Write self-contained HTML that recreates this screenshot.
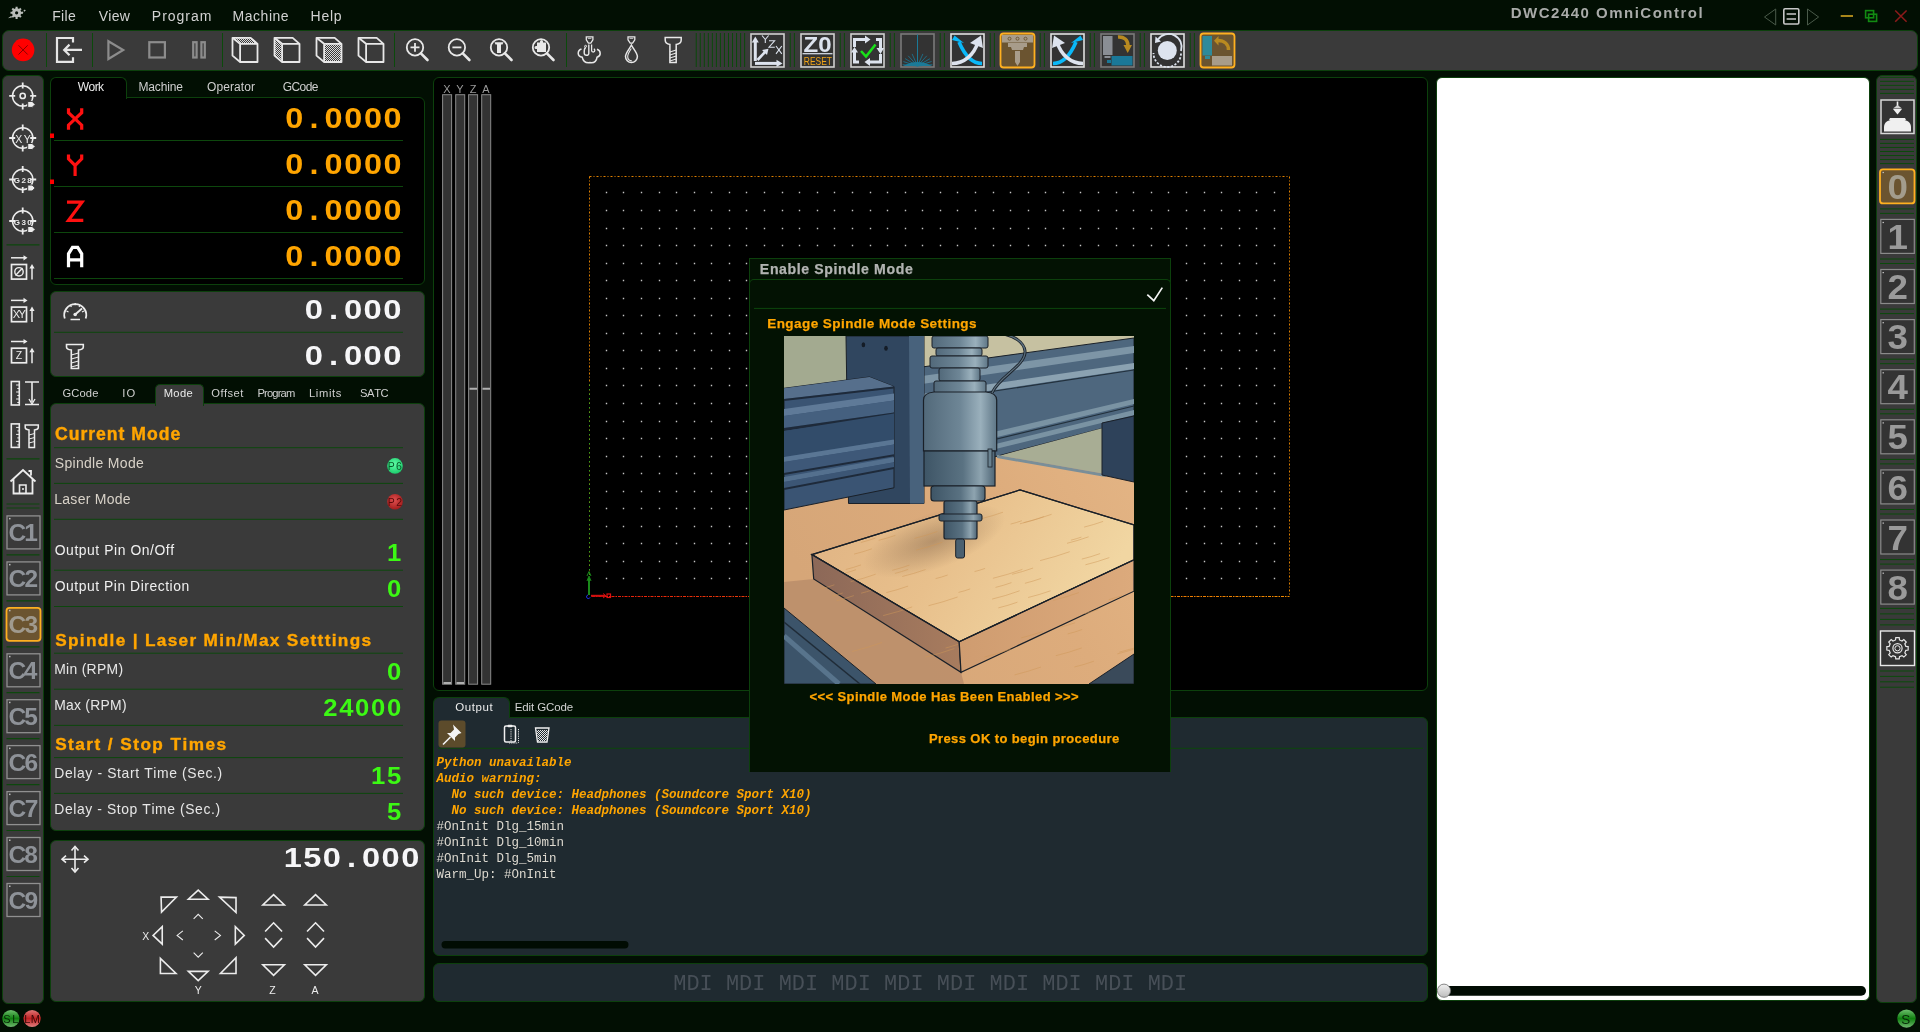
<!DOCTYPE html>
<html><head><meta charset="utf-8"><title>DWC2440 OmniControl</title>
<style>
*{margin:0;padding:0;box-sizing:border-box}
html,body{width:1920px;height:1032px;overflow:hidden;background:#020f03;font-family:"Liberation Sans",sans-serif}
.a{position:absolute}
.t{position:absolute;line-height:1;white-space:pre;font-kerning:none}
.s{position:absolute;overflow:visible}
#root{position:absolute;left:0;top:0;width:1920px;height:1032px;will-change:transform}
</style></head><body><div id="root">
<svg class="s" style="left:0px;top:0px;" width="40" height="30" viewBox="0 0 40 30"><polygon points="22.71,11.75 22.71,13.85 21.09,13.82 20.49,15.25 21.66,16.38 20.18,17.86 19.05,16.69 17.62,17.29 17.65,18.91 15.55,18.91 15.58,17.29 14.15,16.69 13.02,17.86 11.54,16.38 12.71,15.25 12.11,13.82 10.49,13.85 10.49,11.75 12.11,11.78 12.71,10.35 11.54,9.22 13.02,7.74 14.15,8.91 15.58,8.31 15.55,6.69 17.65,6.69 17.62,8.31 19.05,8.91 20.18,7.74 21.66,9.22 20.49,10.35 21.09,11.78" fill="#b9bdb9"/><circle cx="16.6" cy="12.8" r="1.6" fill="#010c03"/><path d="M8,18.2 L11,16 L12.5,17.2 Z" fill="#b9bdb9"/><path d="M21.5,13.5 L26,9.3" stroke="#b9bdb9" stroke-width="1.4" stroke-dasharray="2 1.2"/></svg>
<div class="t" style="left:52.15px;top:9.00px;font-size:14px;color:#d2d2d2;letter-spacing:0.371px;">File</div>
<div class="t" style="left:98.69px;top:9.00px;font-size:14px;color:#d2d2d2;letter-spacing:0.311px;">View</div>
<div class="t" style="left:151.85px;top:9.00px;font-size:14px;color:#d2d2d2;letter-spacing:0.981px;">Program</div>
<div class="t" style="left:232.60px;top:9.00px;font-size:14px;color:#d2d2d2;letter-spacing:0.517px;">Machine</div>
<div class="t" style="left:310.60px;top:9.00px;font-size:14px;color:#d2d2d2;letter-spacing:0.731px;">Help</div>
<div class="t" style="left:1510.80px;top:5.00px;font-size:15px;color:#a9aba9;letter-spacing:1.486px;font-weight:bold;">DWC2440 OmniControl</div>
<svg class="s" style="left:1760px;top:4px;" width="160" height="26" viewBox="0 0 160 26"><path d="M15.7,5 L4.5,13 L15.7,21 Z" fill="none" stroke="#4a5a4a" stroke-width="1"/><rect x="23.8" y="4.8" width="15" height="15.2" rx="1.2" fill="none" stroke="#c8c8c8" stroke-width="1.6"/><path d="M26.6,10 H36 M26.6,15 H36" stroke="#c8c8c8" stroke-width="1.6"/><path d="M47.5,5 L58.6,13 L47.5,21 Z" fill="none" stroke="#4a5a4a" stroke-width="1"/><path d="M80.7,12 H93" stroke="#a8861a" stroke-width="2"/><rect x="105.6" y="6.6" width="8" height="7.2" fill="none" stroke="#128a12" stroke-width="1.6"/><rect x="108.6" y="10.2" width="8" height="7.2" fill="none" stroke="#128a12" stroke-width="1.6"/><path d="M135.2,6.5 L146.6,17.8 M146.6,6.5 L135.2,17.8" stroke="#8a1a1a" stroke-width="1.6"/></svg>
<div class="a" style="left:2px;top:30px;width:1916px;height:41px;background:#3a3a3a;border:1px solid #0c400c;border-radius:7px"></div>
<svg class="s" style="left:0px;top:0px;" width="1920" height="80" viewBox="0 0 1920 80"><defs><pattern id="dots" width="2" height="2" patternUnits="userSpaceOnUse"><rect width="1" height="1" fill="#dcdcdc"/><rect x="1" y="1" width="1" height="1" fill="#dcdcdc"/></pattern></defs><path d="M46.5,33 V67" stroke="#0b4a0b" stroke-width="1"/><path d="M92.5,33 V67" stroke="#0b4a0b" stroke-width="1"/><path d="M222.5,33 V67" stroke="#0b4a0b" stroke-width="1"/><path d="M394.5,33 V67" stroke="#0b4a0b" stroke-width="1"/><path d="M566.5,33 V67" stroke="#0b4a0b" stroke-width="1"/><circle cx="23.1" cy="49.9" r="11.3" fill="#ff0000"/><path d="M18.5,45.3 L27.7,54.5 M27.7,45.3 L18.5,54.5" stroke="#7a0000" stroke-width="0.9"/><path d="M73,42.5 V38 H57 V61.8 H73 V57.3" fill="none" stroke="#e6e6e6" stroke-width="2.2"/><path d="M82,49.9 H64.5 M69.5,44.6 L64.2,49.9 L69.5,55.2" fill="none" stroke="#e6e6e6" stroke-width="2.2"/><path d="M108.4,41.2 L123.2,50 L108.4,59 Z" fill="none" stroke="#8c8c8c" stroke-width="2.2"/><rect x="149.3" y="42.2" width="15.6" height="15.3" fill="none" stroke="#8c8c8c" stroke-width="2.2"/><rect x="193.2" y="42.2" width="3.4" height="15.3" fill="none" stroke="#8c8c8c" stroke-width="2.2"/><rect x="201.4" y="42.2" width="3.4" height="15.3" fill="none" stroke="#8c8c8c" stroke-width="2.2"/><polygon points="232.5,37.8 250.7,37.8 257.5,43.8 240.1,43.8" fill="url(#dots)"/><polygon points="232.5,37.8 250.7,37.8 257.5,43.8 257.5,62.0 240.1,62.0 232.5,55.6" fill="none" stroke="#e8e8e8" stroke-width="1.8" stroke-linejoin="round"/><path d="M232.5,37.8 L240.1,43.8 H257.5 M240.1,43.8 V62" fill="none" stroke="#e8e8e8" stroke-width="1.8"/><polygon points="274.5,37.8 282.1,43.8 282.1,62.0 274.5,55.6" fill="url(#dots)"/><polygon points="274.5,37.8 292.7,37.8 299.5,43.8 299.5,62.0 282.1,62.0 274.5,55.6" fill="none" stroke="#e8e8e8" stroke-width="1.8" stroke-linejoin="round"/><path d="M274.5,37.8 L282.1,43.8 H299.5 M282.1,43.8 V62" fill="none" stroke="#e8e8e8" stroke-width="1.8"/><polygon points="324.1,43.8 341.5,43.8 341.5,62.0 324.1,62.0" fill="url(#dots)"/><polygon points="316.5,37.8 334.7,37.8 341.5,43.8 341.5,62.0 324.1,62.0 316.5,55.6" fill="none" stroke="#e8e8e8" stroke-width="1.8" stroke-linejoin="round"/><path d="M316.5,37.8 L324.1,43.8 H341.5 M324.1,43.8 V62" fill="none" stroke="#e8e8e8" stroke-width="1.8"/><polygon points="358.5,37.8 376.7,37.8 383.5,43.8 383.5,62.0 366.1,62.0 358.5,55.6" fill="none" stroke="#e8e8e8" stroke-width="1.8" stroke-linejoin="round"/><path d="M358.5,37.8 L366.1,43.8 H383.5 M366.1,43.8 V62" fill="none" stroke="#e8e8e8" stroke-width="1.8"/><circle cx="415" cy="47.4" r="8.2" fill="none" stroke="#e8e8e8" stroke-width="1.8"/><path d="M420.9,53.3 L427.5,60" stroke="#e8e8e8" stroke-width="2.6" stroke-linecap="round"/><path d="M410.5,47.4 H419.5 M415,43 V51.8" stroke="#e8e8e8" stroke-width="1.8"/><circle cx="456.9" cy="47.4" r="8.2" fill="none" stroke="#e8e8e8" stroke-width="1.8"/><path d="M462.79999999999995,53.3 L469.4,60" stroke="#e8e8e8" stroke-width="2.6" stroke-linecap="round"/><path d="M452.4,47.4 H461.4" stroke="#e8e8e8" stroke-width="1.8"/><circle cx="499" cy="47.4" r="8.2" fill="none" stroke="#e8e8e8" stroke-width="1.8"/><path d="M504.9,53.3 L511.5,60" stroke="#e8e8e8" stroke-width="2.6" stroke-linecap="round"/><path d="M494.5,42.2 H503.5 L502.5,44.5 H501 V53 H497 V44.5 H495.5 Z" fill="#e8e8e8"/><circle cx="541" cy="47.4" r="8.2" fill="none" stroke="#e8e8e8" stroke-width="1.8"/><path d="M546.9,53.3 L553.5,60" stroke="#e8e8e8" stroke-width="2.6" stroke-linecap="round"/><path d="M537,42.5 H540 V41.5 A1.5,1.5 0 0 1 543,41.5 V42.5 H546 V52 H537 V49 H536 A1.5,1.5 0 0 1 536,46 H537 Z" fill="#e8e8e8"/><path d="M586.3,36.8 H592.9 V39.8 L590.8,43.2 H588.4 L586.3,39.8 Z" fill="none" stroke="#e8e8e8" stroke-width="1.3"/><path d="M587.8,38.4 H591.4" stroke="#e8e8e8" stroke-width="0.8"/><path d="M588.8,44.4 V53.5 C588.8,56 584.3,56 584.2,53 C584.1,50.5 584.3,48.5 585.6,47.4" fill="none" stroke="#e8e8e8" stroke-width="1.4"/><circle cx="585.6" cy="46.3" r="1" fill="none" stroke="#e8e8e8" stroke-width="1"/><path d="M591.6,44.4 V50.5 C591.6,52.5 594.8,52.5 594.8,50.5 C594.8,49.5 594.3,49 593.8,48.8" fill="none" stroke="#e8e8e8" stroke-width="1.3"/><path d="M581.5,49 C577,50.5 577,56.5 582.3,57.3 C583,61.5 586.5,63 590,62.6 C593.5,63 596.5,61.5 597,57.3 C601.5,56 601,50.5 597,49.3" fill="none" stroke="#e8e8e8" stroke-width="1.5"/><path d="M628,36.8 H634.8 V39.8 L632.6,43.2 H630.2 L628,39.8 Z" fill="none" stroke="#e8e8e8" stroke-width="1.3"/><path d="M629.5,38.4 H633.3" stroke="#e8e8e8" stroke-width="0.8"/><path d="M631.4,45 C629.5,49 625.5,53 625.5,56.5 A5.95,5.95 0 0 0 637.4,56.5 C637.4,53 633.3,49 631.4,45 Z" fill="none" stroke="#e8e8e8" stroke-width="1.5"/><path d="M631.3,48.5 C629.5,51.5 627.7,54 627.7,56.5 C627.7,59 629.5,60.8 631.8,60.9" fill="none" stroke="#e8e8e8" stroke-width="1.1"/><path d="M665.2,37.6 H681.2 V40 C681.2,42.5 679.5,44 676.2,44.4 V62.5 H669.9 V44.4 C666.8,44 665.2,42.5 665.2,40 Z" fill="none" stroke="#e8e8e8" stroke-width="1.5"/><path d="M669.9,52 L676.2,50 M669.9,55 L676.2,53 M669.9,58 L676.2,56 M669.9,61 L676.2,59" stroke="#e8e8e8" stroke-width="1.1"/><path d="M696.25,33 V67" stroke="#0b4a0b" stroke-width="1"/><path d="M700.28,33 V67" stroke="#0b4a0b" stroke-width="1"/><path d="M704.31,33 V67" stroke="#0b4a0b" stroke-width="1"/><path d="M708.34,33 V67" stroke="#0b4a0b" stroke-width="1"/><path d="M712.37,33 V67" stroke="#0b4a0b" stroke-width="1"/><path d="M716.40,33 V67" stroke="#0b4a0b" stroke-width="1"/><path d="M720.43,33 V67" stroke="#0b4a0b" stroke-width="1"/><path d="M724.46,33 V67" stroke="#0b4a0b" stroke-width="1"/><path d="M728.49,33 V67" stroke="#0b4a0b" stroke-width="1"/><path d="M732.52,33 V67" stroke="#0b4a0b" stroke-width="1"/><path d="M736.55,33 V67" stroke="#0b4a0b" stroke-width="1"/><path d="M740.58,33 V67" stroke="#0b4a0b" stroke-width="1"/><path d="M744.61,33 V67" stroke="#0b4a0b" stroke-width="1"/><path d="M790.25,33 V67 M794.4,33 V67" stroke="#0b4a0b" stroke-width="1"/><path d="M840.25,33 V67 M844.4,33 V67" stroke="#0b4a0b" stroke-width="1"/><path d="M890.25,33 V67 M894.4,33 V67" stroke="#0b4a0b" stroke-width="1"/><path d="M940.25,33 V67 M944.4,33 V67" stroke="#0b4a0b" stroke-width="1"/><path d="M990.25,33 V67 M994.4,33 V67" stroke="#0b4a0b" stroke-width="1"/><path d="M1040.25,33 V67 M1044.4,33 V67" stroke="#0b4a0b" stroke-width="1"/><path d="M1090.25,33 V67 M1094.4,33 V67" stroke="#0b4a0b" stroke-width="1"/><path d="M1140.25,33 V67 M1144.4,33 V67" stroke="#0b4a0b" stroke-width="1"/><path d="M1190.25,33 V67 M1194.4,33 V67" stroke="#0b4a0b" stroke-width="1"/><rect x="751" y="34" width="33" height="33" fill="#333" stroke="#d0d0d0" stroke-width="1.6"/><path d="M755.3,61 V42" stroke="#dde3ee" stroke-width="3"/><path d="M751.8,42.5 L755.3,36.5 L758.8,42.5 Z" fill="#dde3ee"/><path d="M755,63.4 H777" stroke="#dde3ee" stroke-width="3"/><path d="M776.5,59.8 L782.5,63.4 L776.5,67 Z" fill="#dde3ee"/><path d="M757.5,60 L765,52" stroke="#dde3ee" stroke-width="2.6"/><path d="M762,50 L768.5,48.8 L767,55 Z" fill="#dde3ee"/><path d="M762,35.5 L765.3,39.5 L768.6,35.5 M765.3,39.5 V43 M769,40.8 H774.6 L769,47.2 H774.8 M776,46 L781.8,53.8 M781.8,46 L776,53.8" fill="none" stroke="#dde3ee" stroke-width="1.1"/><rect x="801" y="34" width="33" height="33" fill="#333" stroke="#d0d0d0" stroke-width="1.6"/><path d="M802.5,53.7 H832.5" stroke="#dde3ee" stroke-width="1.2"/><rect x="851" y="34" width="33" height="33" fill="#333" stroke="#d0d0d0" stroke-width="1.6"/><path d="M854.5,47 V39.5 H866 M876,39.5 H880.5 V49 M880.5,54 V62 H869 M859,62 H854.5 V52" fill="none" stroke="#dde3ee" stroke-width="3"/><path d="M865,35.5 L870.5,39.5 L865,43.5 Z M876.5,48 L880.5,54 L884,48 Z M870,58 L864.5,62 L870,66 Z M851,52.5 L854.5,47 L858,52.5 Z" fill="#dde3ee"/><path d="M861,51 L866,56.5 L875.5,44.5" fill="none" stroke="#19e019" stroke-width="2.6"/><rect x="901" y="34" width="33" height="33" fill="#333" stroke="#7a7a7a" stroke-width="1.6"/><path d="M917.5,34.5 V66" stroke="#1b7a98" stroke-width="1"/><path d="M917.5,66 L932.4,64.7" stroke="#1b7a98" stroke-width="0.8"/><path d="M917.5,66 L931.6,61.5" stroke="#1b7a98" stroke-width="0.8"/><path d="M917.5,66 L929.9,58.7" stroke="#1b7a98" stroke-width="0.8"/><path d="M917.5,66 L926.8,55.8" stroke="#1b7a98" stroke-width="0.8"/><path d="M917.5,66 L922.9,53.9" stroke="#1b7a98" stroke-width="0.8"/><path d="M917.5,66 L912.1,53.9" stroke="#1b7a98" stroke-width="0.8"/><path d="M917.5,66 L908.2,55.8" stroke="#1b7a98" stroke-width="0.8"/><path d="M917.5,66 L905.1,58.6" stroke="#1b7a98" stroke-width="0.8"/><path d="M917.5,66 L903.4,61.6" stroke="#1b7a98" stroke-width="0.8"/><path d="M917.5,66 L902.6,64.7" stroke="#1b7a98" stroke-width="0.8"/><path d="M903,66 Q917.5,58 932,66 Z" fill="#1b7a98"/><g transform="translate(967.5,0) scale(1,1) translate(-967.5,0)"><rect x="951" y="34" width="33" height="33" fill="#333" stroke="#e0e0e0" stroke-width="1.6"/><path d="M982,63.5 C972,63.5 965,56 959,42" fill="none" stroke="#0ab8f8" stroke-width="3.6"/><path d="M952,40 L954.5,35.5 L964,43 Z" fill="#0ab8f8"/><path d="M952,63.5 C964,63.5 974,55 978,42" fill="none" stroke="#dde3ee" stroke-width="3.6"/><path d="M970,43 L981,35.5 L983,48 Z" fill="#dde3ee"/></g><g transform="translate(1067.5,0) scale(-1,1) translate(-1067.5,0)"><rect x="1051" y="34" width="33" height="33" fill="#333" stroke="#e0e0e0" stroke-width="1.6"/><path d="M1082,63.5 C1072,63.5 1065,56 1059,42" fill="none" stroke="#0ab8f8" stroke-width="3.6"/><path d="M1052,40 L1054.5,35.5 L1064,43 Z" fill="#0ab8f8"/><path d="M1052,63.5 C1064,63.5 1074,55 1078,42" fill="none" stroke="#dde3ee" stroke-width="3.6"/><path d="M1070,43 L1081,35.5 L1083,48 Z" fill="#dde3ee"/></g><rect x="1000.5" y="33.5" width="34" height="34" rx="3" fill="#6b5430" stroke="#ffb020" stroke-width="1.8"/><rect x="1002" y="35" width="31" height="7.5" fill="#a89c8a"/><circle cx="1009.5" cy="38.7" r="1.5" fill="none" stroke="#6b5430" stroke-width="0.9"/><circle cx="1017.5" cy="38.7" r="1.5" fill="none" stroke="#6b5430" stroke-width="0.9"/><circle cx="1025.5" cy="38.7" r="1.5" fill="none" stroke="#6b5430" stroke-width="0.9"/><path d="M1008,43 H1027 V47 H1024 L1023,50 H1012 L1011,47 H1008 Z" fill="#a89c8a"/><path d="M1015,51 H1020 V62 L1017.5,66 L1015,62 Z" fill="#a89c8a"/><rect x="1101" y="34" width="33" height="33" fill="#333" stroke="#7a7a7a" stroke-width="1.6"/><rect x="1103" y="36" width="9.5" height="19" fill="#8a8e94"/><rect x="1104.5" y="56" width="6" height="2" fill="#8a8e94"/><rect x="1111.5" y="56" width="21" height="9.5" fill="#1a7898"/><rect x="1107" y="60" width="4" height="3" fill="#1a7898"/><path d="M1118,37 C1124,36.5 1128,40 1128,45.5" fill="none" stroke="#b88a20" stroke-width="3.5"/><path d="M1123.5,45 L1132,45 L1127.7,53 Z" fill="#b88a20"/><rect x="1151" y="34" width="33" height="33" fill="#333" stroke="#e0e0e0" stroke-width="1.6"/><circle cx="1167.3" cy="50.5" r="9.5" fill="#dde3ee"/><path d="M1158,39.5 A13,13 0 0 1 1181,51" fill="none" stroke="#dde3ee" stroke-width="1.8"/><path d="M1155.5,36.5 L1155,43 L1161,41.5 Z" fill="#dde3ee"/><path d="M1181,53.5 A13,13 0 0 1 1153.5,53" fill="none" stroke="#dde3ee" stroke-width="1.8" stroke-dasharray="2.2 1.6"/><rect x="1200.5" y="33.5" width="34" height="34" rx="3" fill="#6b5430" stroke="#ffb020" stroke-width="1.8"/><rect x="1202.5" y="36" width="9.5" height="19.5" fill="#2e8a9a"/><rect x="1205" y="56" width="5" height="3" fill="#2e8a9a"/><rect x="1212" y="56" width="20" height="9.5" fill="#a89c8a"/><path d="M1228.5,50 C1228.5,44 1224,40.5 1218,40.5" fill="none" stroke="#b88a20" stroke-width="3.5"/><path d="M1218.5,36 L1214,40.8 L1218.5,45.5 Z" fill="#b88a20"/></svg>
<svg class="s" style="left:0;top:0" width="1" height="1"><text x="803.8" y="64.9" font-family="Liberation Sans" font-size="11.6" fill="#f0a418" textLength="28.2" lengthAdjust="spacingAndGlyphs">RESET</text><text x="803.5" y="51.8" font-family="Liberation Sans" font-weight="bold" font-size="21.5" fill="#dde3ee" textLength="28" lengthAdjust="spacingAndGlyphs">Z0</text></svg>
<div class="a" style="left:2px;top:75px;width:42px;height:929px;background:#3a3a3a;border:1px solid #0c400c;border-radius:6px"></div>
<svg class="s" style="left:0px;top:0px;" width="48" height="520" viewBox="0 0 48 520"><circle cx="22.7" cy="95.9" r="10.2" fill="none" stroke="#ececec" stroke-width="1.5"/><path d="M22.7,82.4 V88.4 M22.7,103.4 V109.4 M9.2,95.9 H15.2 M30.2,95.9 H36.2" stroke="#ececec" stroke-width="1.8"/><path d="M27.7,101.4 h4.5 l3,3 l-3,3 h-4.5 Z" fill="#ececec" stroke="#3a3a3a" stroke-width="1"/><circle cx="22.7" cy="95.9" r="2.6" fill="none" stroke="#ececec" stroke-width="1.6"/><circle cx="22.7" cy="138" r="10.2" fill="none" stroke="#ececec" stroke-width="1.5"/><path d="M22.7,124.5 V130.5 M22.7,145.5 V151.5 M9.2,138 H15.2 M30.2,138 H36.2" stroke="#ececec" stroke-width="1.8"/><path d="M27.7,143.5 h4.5 l3,3 l-3,3 h-4.5 Z" fill="#ececec" stroke="#3a3a3a" stroke-width="1"/><circle cx="22.7" cy="179.5" r="10.2" fill="none" stroke="#ececec" stroke-width="1.5"/><path d="M22.7,166.0 V172.0 M22.7,187.0 V193.0 M9.2,179.5 H15.2 M30.2,179.5 H36.2" stroke="#ececec" stroke-width="1.8"/><path d="M27.7,185.0 h4.5 l3,3 l-3,3 h-4.5 Z" fill="#ececec" stroke="#3a3a3a" stroke-width="1"/><circle cx="22.7" cy="221" r="10.2" fill="none" stroke="#ececec" stroke-width="1.5"/><path d="M22.7,207.5 V213.5 M22.7,228.5 V234.5 M9.2,221 H15.2 M30.2,221 H36.2" stroke="#ececec" stroke-width="1.8"/><path d="M27.7,226.5 h4.5 l3,3 l-3,3 h-4.5 Z" fill="#ececec" stroke="#3a3a3a" stroke-width="1"/></svg>
<div class="t" style="left:15.26px;top:134.00px;font-size:10.5px;color:#ececec;letter-spacing:1.460px;">XY</div>
<div class="t" style="left:13.87px;top:177.00px;font-size:8px;color:#ececec;letter-spacing:1.377px;font-weight:bold;">G28</div>
<div class="t" style="left:13.87px;top:219.00px;font-size:8px;color:#ececec;letter-spacing:1.418px;font-weight:bold;">G30</div>
<svg class="s" style="left:0px;top:0px;" width="48" height="520" viewBox="0 0 48 520"><path d="M6.5,244.8 H39.5" stroke="#0d470d" stroke-width="1.2"/><path d="M11,257.8 H24.5" stroke="#ececec" stroke-width="1.5"/><path d="M23.5,255.2 L27.5,257.8 L23.5,260.4 Z" fill="#ececec"/><rect x="11.5" y="264.5" width="15" height="14.6" fill="none" stroke="#ececec" stroke-width="1.7"/><path d="M32,279.5 V267.5" stroke="#ececec" stroke-width="1.5"/><path d="M29.4,268.5 L32,264 L34.6,268.5 Z" fill="#ececec"/><circle cx="19" cy="271.8" r="4.2" fill="none" stroke="#ececec" stroke-width="1.4"/><path d="M15.5,275.5 L22.5,268" stroke="#ececec" stroke-width="1.4"/><path d="M11,300.40000000000003 H24.5" stroke="#ececec" stroke-width="1.5"/><path d="M23.5,297.8 L27.5,300.40000000000003 L23.5,303.0 Z" fill="#ececec"/><rect x="11.5" y="307.1" width="15" height="14.6" fill="none" stroke="#ececec" stroke-width="1.7"/><path d="M32,322.1 V310.1" stroke="#ececec" stroke-width="1.5"/><path d="M29.4,311.1 L32,306.6 L34.6,311.1 Z" fill="#ececec"/><path d="M11,341.5 H24.5" stroke="#ececec" stroke-width="1.5"/><path d="M23.5,338.9 L27.5,341.5 L23.5,344.09999999999997 Z" fill="#ececec"/><rect x="11.5" y="348.2" width="15" height="14.6" fill="none" stroke="#ececec" stroke-width="1.7"/><path d="M32,363.2 V351.2" stroke="#ececec" stroke-width="1.5"/><path d="M29.4,352.2 L32,347.7 L34.6,352.2 Z" fill="#ececec"/><rect x="11.3" y="381.5" width="8" height="23.5" fill="none" stroke="#ececec" stroke-width="1.6"/><path d="M16.1,385.0 H19.3" stroke="#ececec" stroke-width="1"/><path d="M17.3,388.5 H19.3" stroke="#ececec" stroke-width="1"/><path d="M16.1,392.0 H19.3" stroke="#ececec" stroke-width="1"/><path d="M17.3,395.5 H19.3" stroke="#ececec" stroke-width="1"/><path d="M16.1,399.0 H19.3" stroke="#ececec" stroke-width="1"/><path d="M17.3,402.5 H19.3" stroke="#ececec" stroke-width="1"/><rect x="11.3" y="423.9" width="8" height="23.5" fill="none" stroke="#ececec" stroke-width="1.6"/><path d="M16.1,427.4 H19.3" stroke="#ececec" stroke-width="1"/><path d="M17.3,430.9 H19.3" stroke="#ececec" stroke-width="1"/><path d="M16.1,434.4 H19.3" stroke="#ececec" stroke-width="1"/><path d="M17.3,437.9 H19.3" stroke="#ececec" stroke-width="1"/><path d="M16.1,441.4 H19.3" stroke="#ececec" stroke-width="1"/><path d="M17.3,444.9 H19.3" stroke="#ececec" stroke-width="1"/><path d="M25,382 H39 M25,404.5 H39 M32,382 V402" stroke="#ececec" stroke-width="1.6"/><path d="M29,399 L32,404 L35,399" fill="none" stroke="#ececec" stroke-width="1.4"/><path d="M25.2,425 H38.3 V427.5 C38.3,429 36,429.8 34.5,430 V447.5 H29 V430 C27.5,429.8 25.2,429 25.2,427.5 Z" fill="none" stroke="#ececec" stroke-width="1.5"/><path d="M29,435 L34.5,433.5 M29,439 L34.5,437.5 M29,443 L34.5,441.5" stroke="#ececec" stroke-width="1"/><path d="M6.5,458.8 H39.5 M6.5,504 H39.5 M6.5,508 H39.5" stroke="#0d470d" stroke-width="1.2"/><path d="M10.5,481.5 L23,470 L35.5,481.5 M13.5,479 V493.5 H32.5 V479 M31,475.5 V471 H28.5" fill="none" stroke="#ececec" stroke-width="1.8"/><path d="M19.5,493.5 V485 H26 V493.5 M22,489 H24" fill="none" stroke="#ececec" stroke-width="1.6"/></svg>
<div class="t" style="left:15.67px;top:350.00px;font-size:10.5px;color:#ececec;">Z</div>
<div class="t" style="left:12.75px;top:309.00px;font-size:11px;color:#ececec;letter-spacing:-1.685px;">XY</div>
<svg class="s" style="left:0px;top:0px;" width="48" height="1032" viewBox="0 0 48 1032"><rect x="7" y="515.9" width="33" height="33" fill="#3a3a3a" stroke="#909090" stroke-width="1.3"/><rect x="9" y="517.9" width="1.5" height="1.5" fill="#bbb"/><path d="M6.5,554.9 H39.5" stroke="#0d470d" stroke-width="1.2"/><rect x="7" y="561.9" width="33" height="33" fill="#3a3a3a" stroke="#909090" stroke-width="1.3"/><rect x="9" y="563.9" width="1.5" height="1.5" fill="#bbb"/><path d="M6.5,600.8 H39.5" stroke="#0d470d" stroke-width="1.2"/><rect x="6.5" y="607.8" width="34" height="33" rx="3" fill="#6b5430" stroke="#ffb020" stroke-width="1.8"/><rect x="9" y="609.8" width="1.5" height="1.5" fill="#bbb"/><path d="M6.5,646.8 H39.5" stroke="#0d470d" stroke-width="1.2"/><rect x="7" y="653.8" width="33" height="33" fill="#3a3a3a" stroke="#909090" stroke-width="1.3"/><rect x="9" y="655.8" width="1.5" height="1.5" fill="#bbb"/><path d="M6.5,692.7 H39.5" stroke="#0d470d" stroke-width="1.2"/><rect x="7" y="699.7" width="33" height="33" fill="#3a3a3a" stroke="#909090" stroke-width="1.3"/><rect x="9" y="701.7" width="1.5" height="1.5" fill="#bbb"/><path d="M6.5,738.6 H39.5" stroke="#0d470d" stroke-width="1.2"/><rect x="7" y="745.6" width="33" height="33" fill="#3a3a3a" stroke="#909090" stroke-width="1.3"/><rect x="9" y="747.6" width="1.5" height="1.5" fill="#bbb"/><path d="M6.5,784.6 H39.5" stroke="#0d470d" stroke-width="1.2"/><rect x="7" y="791.6" width="33" height="33" fill="#3a3a3a" stroke="#909090" stroke-width="1.3"/><rect x="9" y="793.6" width="1.5" height="1.5" fill="#bbb"/><path d="M6.5,830.5 H39.5" stroke="#0d470d" stroke-width="1.2"/><rect x="7" y="837.5" width="33" height="33" fill="#3a3a3a" stroke="#909090" stroke-width="1.3"/><rect x="9" y="839.5" width="1.5" height="1.5" fill="#bbb"/><path d="M6.5,876.5 H39.5" stroke="#0d470d" stroke-width="1.2"/><rect x="7" y="883.5" width="33" height="33" fill="#3a3a3a" stroke="#909090" stroke-width="1.3"/><rect x="9" y="885.5" width="1.5" height="1.5" fill="#bbb"/></svg>
<div class="t" style="left:8.60px;top:521.00px;font-size:24.5px;color:#8e9298;letter-spacing:-2.032px;font-weight:bold;">C1</div>
<div class="t" style="left:8.60px;top:567.00px;font-size:24.5px;color:#8e9298;letter-spacing:-1.733px;font-weight:bold;">C2</div>
<div class="t" style="left:8.60px;top:613.00px;font-size:24.5px;color:#a09a8e;letter-spacing:-1.829px;font-weight:bold;">C3</div>
<div class="t" style="left:8.60px;top:659.00px;font-size:24.5px;color:#8e9298;letter-spacing:-2.582px;font-weight:bold;">C4</div>
<div class="t" style="left:8.60px;top:705.00px;font-size:24.5px;color:#8e9298;letter-spacing:-2.032px;font-weight:bold;">C5</div>
<div class="t" style="left:8.60px;top:751.00px;font-size:24.5px;color:#8e9298;letter-spacing:-1.829px;font-weight:bold;">C6</div>
<div class="t" style="left:8.60px;top:797.00px;font-size:24.5px;color:#8e9298;letter-spacing:-1.637px;font-weight:bold;">C7</div>
<div class="t" style="left:8.60px;top:843.00px;font-size:24.5px;color:#8e9298;letter-spacing:-1.960px;font-weight:bold;">C8</div>
<div class="t" style="left:8.60px;top:889.00px;font-size:24.5px;color:#8e9298;letter-spacing:-1.805px;font-weight:bold;">C9</div>
<svg class="s" style="left:0px;top:1000px;" width="60" height="32" viewBox="0 0 60 32"><defs><linearGradient id="lg" x1="0" y1="0" x2="0" y2="1"><stop offset="0" stop-color="#70c070"/><stop offset="0.5" stop-color="#108010"/><stop offset="1" stop-color="#70b870"/></linearGradient><linearGradient id="lr" x1="0" y1="0" x2="0" y2="1"><stop offset="0" stop-color="#e07878"/><stop offset="0.5" stop-color="#c02020"/><stop offset="1" stop-color="#e08080"/></linearGradient></defs><circle cx="10.9" cy="18.5" r="8.6" fill="url(#lg)"/><circle cx="32.1" cy="18.5" r="8.6" fill="url(#lr)"/></svg>
<div class="t" style="left:3.30px;top:1014.00px;font-size:11px;color:#062806;letter-spacing:1.510px;">SL</div>
<div class="t" style="left:24.30px;top:1014.00px;font-size:11px;color:#3a0606;letter-spacing:0.324px;">LM</div>
<div class="a" style="left:50px;top:97px;width:375px;height:188px;background:#000;border:1px solid #0c400c;border-radius:0 6px 6px 6px"></div>
<div class="a" style="left:50px;top:77px;width:77px;height:22px;background:#000;border:1px solid #0c400c;border-bottom:none;border-radius:6px 6px 0 0"></div>
<div class="t" style="left:77.75px;top:81.00px;font-size:12px;color:#ececec;letter-spacing:-0.554px;">Work</div>
<div class="t" style="left:138.52px;top:81.00px;font-size:12px;color:#cfcfcf;letter-spacing:-0.157px;">Machine</div>
<div class="t" style="left:207.03px;top:81.00px;font-size:12px;color:#cfcfcf;letter-spacing:0.080px;">Operator</div>
<div class="t" style="left:282.80px;top:81.00px;font-size:12px;color:#cfcfcf;letter-spacing:-0.596px;">GCode</div>
<svg class="s" style="left:0px;top:0px;" width="440" height="300" viewBox="0 0 440 300"><path d="M54,140.5 H403" stroke="#0d470d" stroke-width="1"/><path d="M54,186.5 H403" stroke="#0d470d" stroke-width="1"/><path d="M54,232.5 H403" stroke="#0d470d" stroke-width="1"/><path d="M54,278.5 H403" stroke="#0d470d" stroke-width="1"/><rect x="50" y="133.5" width="4" height="4.5" fill="#ff0000"/><rect x="50" y="179.5" width="4" height="4.5" fill="#ff0000"/><path d="M68.5,108.2 V112.7 L75.1,118.9 L81.7,112.7 V108.2 M68.5,129.7 V125.2 L75.1,118.9 L81.7,125.2 V129.7" fill="none" stroke="#ff1010" stroke-width="3.2"/><path d="M68.5,154.4 V158.9 L75.1,165.4 L81.7,158.9 V154.4 M75.1,165.4 V175.9" fill="none" stroke="#ff1010" stroke-width="3.2"/><path d="M67,202.1 H82 L68.5,220.3 H83.3" fill="none" stroke="#ff1010" stroke-width="3.2"/><path d="M68.5,267.3 V253.8 L72.5,247.4 H77.7 L81.7,253.8 V267.3 M68.5,259.8 H81.7" fill="none" stroke="#ffffff" stroke-width="3.2"/></svg>
<svg class="s" style="left:0;top:0" width="1" height="1"><g font-family="Liberation Sans" font-weight="bold" font-size="28.67" fill="#ffa500"><text transform="translate(294.30,127.72) scale(1.129,1)" text-anchor="middle">0</text><text transform="translate(313.95,127.72) scale(1.129,1)" text-anchor="middle">.</text><text transform="translate(333.60,127.72) scale(1.129,1)" text-anchor="middle">0</text><text transform="translate(353.25,127.72) scale(1.129,1)" text-anchor="middle">0</text><text transform="translate(372.90,127.72) scale(1.129,1)" text-anchor="middle">0</text><text transform="translate(392.55,127.72) scale(1.129,1)" text-anchor="middle">0</text></g></svg>
<svg class="s" style="left:0;top:0" width="1" height="1"><g font-family="Liberation Sans" font-weight="bold" font-size="28.67" fill="#ffa500"><text transform="translate(294.30,173.72) scale(1.129,1)" text-anchor="middle">0</text><text transform="translate(313.95,173.72) scale(1.129,1)" text-anchor="middle">.</text><text transform="translate(333.60,173.72) scale(1.129,1)" text-anchor="middle">0</text><text transform="translate(353.25,173.72) scale(1.129,1)" text-anchor="middle">0</text><text transform="translate(372.90,173.72) scale(1.129,1)" text-anchor="middle">0</text><text transform="translate(392.55,173.72) scale(1.129,1)" text-anchor="middle">0</text></g></svg>
<svg class="s" style="left:0;top:0" width="1" height="1"><g font-family="Liberation Sans" font-weight="bold" font-size="28.67" fill="#ffa500"><text transform="translate(294.30,219.72) scale(1.129,1)" text-anchor="middle">0</text><text transform="translate(313.95,219.72) scale(1.129,1)" text-anchor="middle">.</text><text transform="translate(333.60,219.72) scale(1.129,1)" text-anchor="middle">0</text><text transform="translate(353.25,219.72) scale(1.129,1)" text-anchor="middle">0</text><text transform="translate(372.90,219.72) scale(1.129,1)" text-anchor="middle">0</text><text transform="translate(392.55,219.72) scale(1.129,1)" text-anchor="middle">0</text></g></svg>
<svg class="s" style="left:0;top:0" width="1" height="1"><g font-family="Liberation Sans" font-weight="bold" font-size="28.67" fill="#ffa500"><text transform="translate(294.30,265.72) scale(1.129,1)" text-anchor="middle">0</text><text transform="translate(313.95,265.72) scale(1.129,1)" text-anchor="middle">.</text><text transform="translate(333.60,265.72) scale(1.129,1)" text-anchor="middle">0</text><text transform="translate(353.25,265.72) scale(1.129,1)" text-anchor="middle">0</text><text transform="translate(372.90,265.72) scale(1.129,1)" text-anchor="middle">0</text><text transform="translate(392.55,265.72) scale(1.129,1)" text-anchor="middle">0</text></g></svg>
<div class="a" style="left:50px;top:291px;width:375px;height:85.5px;background:#3a3a3a;border:1px solid #0c400c;border-radius:6px"></div>
<svg class="s" style="left:0px;top:0px;" width="440" height="400" viewBox="0 0 440 400"><path d="M54,332.3 H403" stroke="#0d470d" stroke-width="1"/><path d="M64.8,318.5 A11,11 0 1 1 85.7,318.5" fill="none" stroke="#ececec" stroke-width="1.8"/><path d="M66.5,311 L68.5,312 M70,305 L71.5,306.8 M75.2,303 V305.2 M80.4,305 L79,306.8 M84,311 L82,312" stroke="#ececec" stroke-width="1.3"/><path d="M75.2,314.5 L82,308.5" stroke="#ececec" stroke-width="1.8"/><circle cx="75.2" cy="314.5" r="1.8" fill="#ececec"/><path d="M70.5,319.5 H80" stroke="#ececec" stroke-width="1.5"/><path d="M66.5,344.5 H83.3 V347 C83.3,349 80.5,349.8 78.5,350 V368.5 H71.3 V350 C69.3,349.8 66.5,349 66.5,347 Z" fill="none" stroke="#ececec" stroke-width="1.6"/><path d="M71.3,355 L78.5,353 M71.3,359 L78.5,357 M71.3,363 L78.5,361 M71.3,367 L78.5,365" stroke="#ececec" stroke-width="1.1"/></svg>
<svg class="s" style="left:0;top:0" width="1" height="1"><g font-family="Liberation Sans" font-weight="bold" font-size="28.25" fill="#f6f6f8"><text transform="translate(313.90,319.22) scale(1.161,1)" text-anchor="middle">0</text><text transform="translate(333.50,319.22) scale(1.161,1)" text-anchor="middle">.</text><text transform="translate(353.10,319.22) scale(1.161,1)" text-anchor="middle">0</text><text transform="translate(372.70,319.22) scale(1.161,1)" text-anchor="middle">0</text><text transform="translate(392.30,319.22) scale(1.161,1)" text-anchor="middle">0</text></g></svg>
<svg class="s" style="left:0;top:0" width="1" height="1"><g font-family="Liberation Sans" font-weight="bold" font-size="28.25" fill="#f6f6f8"><text transform="translate(313.90,365.12) scale(1.161,1)" text-anchor="middle">0</text><text transform="translate(333.50,365.12) scale(1.161,1)" text-anchor="middle">.</text><text transform="translate(353.10,365.12) scale(1.161,1)" text-anchor="middle">0</text><text transform="translate(372.70,365.12) scale(1.161,1)" text-anchor="middle">0</text><text transform="translate(392.30,365.12) scale(1.161,1)" text-anchor="middle">0</text></g></svg>
<div class="a" style="left:50px;top:403px;width:375px;height:428px;background:#3a3a3a;border:1px solid #0c400c;border-radius:6px"></div>
<div class="a" style="left:154.5px;top:384px;width:49px;height:22px;background:#3a3a3a;border:1px solid #0c400c;border-bottom:none;border-radius:5px 5px 0 0"></div>
<div class="t" style="left:62.44px;top:388.00px;font-size:11.2px;color:#d0d0d0;letter-spacing:0.119px;">GCode</div>
<div class="t" style="left:122.37px;top:388.00px;font-size:11.2px;color:#d0d0d0;letter-spacing:0.946px;">IO</div>
<div class="t" style="left:163.68px;top:388.00px;font-size:11.2px;color:#eaeaea;letter-spacing:0.333px;">Mode</div>
<div class="t" style="left:211.27px;top:388.00px;font-size:11.2px;color:#d0d0d0;letter-spacing:0.447px;">Offset</div>
<div class="t" style="left:257.38px;top:388.00px;font-size:11.2px;color:#d0d0d0;letter-spacing:-0.832px;">Program</div>
<div class="t" style="left:308.88px;top:388.00px;font-size:11.2px;color:#d0d0d0;letter-spacing:0.675px;">Limits</div>
<div class="t" style="left:359.99px;top:388.00px;font-size:11.2px;color:#d0d0d0;letter-spacing:-0.378px;">SATC</div>
<svg class="s" style="left:0px;top:0px;" width="440" height="840" viewBox="0 0 440 840"><path d="M54,447.7 H403" stroke="#0d470d" stroke-width="1"/><path d="M54,483.4 H403" stroke="#0d470d" stroke-width="1"/><path d="M54,519.3 H403" stroke="#0d470d" stroke-width="1"/><path d="M54,570.2 H403" stroke="#0d470d" stroke-width="1"/><path d="M54,606.5 H403" stroke="#0d470d" stroke-width="1"/><path d="M54,653.2 H403" stroke="#0d470d" stroke-width="1"/><path d="M54,689.2 H403" stroke="#0d470d" stroke-width="1"/><path d="M54,725.4 H403" stroke="#0d470d" stroke-width="1"/><path d="M54,757.6 H403" stroke="#0d470d" stroke-width="1"/><path d="M54,793.4 H403" stroke="#0d470d" stroke-width="1"/><defs><radialGradient id="g6" cx="0.45" cy="0.4" r="0.65"><stop offset="0" stop-color="#60ffa8"/><stop offset="1" stop-color="#18c868"/></radialGradient><radialGradient id="r2" cx="0.45" cy="0.4" r="0.65"><stop offset="0" stop-color="#e05050"/><stop offset="1" stop-color="#a01818"/></radialGradient></defs><circle cx="395" cy="465.9" r="7.8" fill="url(#g6)"/><circle cx="395" cy="501.8" r="7.8" fill="url(#r2)"/></svg>
<div class="t" style="left:387.64px;top:461.00px;font-size:10.5px;color:#0a5a2a;letter-spacing:1.480px;">P6</div>
<div class="t" style="left:387.64px;top:497.00px;font-size:10.5px;color:#5a0a0a;letter-spacing:1.546px;">P2</div>
<div class="t" style="left:54.98px;top:426.00px;font-size:17.6px;color:#ffa500;letter-spacing:0.993px;font-weight:bold;-webkit-text-stroke:0.4px #ffa500;">Current Mode</div>
<div class="t" style="left:54.76px;top:456.00px;font-size:14px;color:#d8d2c8;letter-spacing:0.313px;">Spindle Mode</div>
<div class="t" style="left:54.25px;top:492.00px;font-size:14px;color:#d8d2c8;letter-spacing:0.271px;">Laser Mode</div>
<div class="t" style="left:54.74px;top:544.00px;font-size:13.9px;color:#f0f0f0;letter-spacing:0.560px;">Output Pin On/Off</div>
<div class="t" style="left:54.74px;top:580.00px;font-size:13.9px;color:#f0f0f0;letter-spacing:0.535px;">Output Pin Direction</div>
<div class="t" style="left:55.20px;top:632.00px;font-size:17.2px;color:#ffa500;letter-spacing:1.335px;font-weight:bold;-webkit-text-stroke:0.4px #ffa500;">Spindle | Laser Min/Max Setttings</div>
<div class="t" style="left:54.26px;top:663.00px;font-size:13.9px;color:#e6e6e6;letter-spacing:0.300px;">Min (RPM)</div>
<div class="t" style="left:54.26px;top:699.00px;font-size:13.9px;color:#e6e6e6;letter-spacing:0.254px;">Max (RPM)</div>
<div class="t" style="left:55.20px;top:736.00px;font-size:17.2px;color:#ffa500;letter-spacing:1.452px;font-weight:bold;-webkit-text-stroke:0.4px #ffa500;">Start / Stop Times</div>
<div class="t" style="left:54.26px;top:767.00px;font-size:13.9px;color:#e6e6e6;letter-spacing:0.632px;">Delay - Start Time (Sec.)</div>
<div class="t" style="left:54.26px;top:803.00px;font-size:13.9px;color:#e6e6e6;letter-spacing:0.597px;">Delay - Stop Time (Sec.)</div>
<svg class="s" style="left:0;top:0" width="1" height="1"><g font-family="Liberation Sans" font-weight="bold" font-size="23.16" fill="#3cf814"><text transform="translate(394.10,561.07) scale(1.107,1)" text-anchor="middle">1</text></g></svg>
<svg class="s" style="left:0;top:0" width="1" height="1"><g font-family="Liberation Sans" font-weight="bold" font-size="23.16" fill="#3cf814"><text transform="translate(394.10,597.27) scale(1.107,1)" text-anchor="middle">0</text></g></svg>
<svg class="s" style="left:0;top:0" width="1" height="1"><g font-family="Liberation Sans" font-weight="bold" font-size="23.16" fill="#3cf814"><text transform="translate(394.10,680.27) scale(1.107,1)" text-anchor="middle">0</text></g></svg>
<svg class="s" style="left:0;top:0" width="1" height="1"><g font-family="Liberation Sans" font-weight="bold" font-size="23.16" fill="#3cf814"><text transform="translate(330.34,716.07) scale(1.107,1)" text-anchor="middle">2</text><text transform="translate(346.28,716.07) scale(1.107,1)" text-anchor="middle">4</text><text transform="translate(362.22,716.07) scale(1.107,1)" text-anchor="middle">0</text><text transform="translate(378.16,716.07) scale(1.107,1)" text-anchor="middle">0</text><text transform="translate(394.10,716.07) scale(1.107,1)" text-anchor="middle">0</text></g></svg>
<svg class="s" style="left:0;top:0" width="1" height="1"><g font-family="Liberation Sans" font-weight="bold" font-size="23.16" fill="#3cf814"><text transform="translate(378.16,784.37) scale(1.107,1)" text-anchor="middle">1</text><text transform="translate(394.10,784.37) scale(1.107,1)" text-anchor="middle">5</text></g></svg>
<svg class="s" style="left:0;top:0" width="1" height="1"><g font-family="Liberation Sans" font-weight="bold" font-size="23.16" fill="#3cf814"><text transform="translate(394.10,820.07) scale(1.107,1)" text-anchor="middle">5</text></g></svg>
<div class="a" style="left:50px;top:840px;width:375px;height:162px;background:#3a3a3a;border:1px solid #0c400c;border-radius:6px"></div>
<svg class="s" style="left:0px;top:0px;" width="440" height="1032" viewBox="0 0 440 1032"><polygon points="161.09,897.14 176.44,897.14 161.55,912.03" fill="none" stroke="#ececec" stroke-width="1.6" stroke-linejoin="miter"/><polygon points="219.52,897.14 236.02,897.60 236.02,912.49" fill="none" stroke="#ececec" stroke-width="1.6" stroke-linejoin="miter"/><polygon points="160.40,958.32 160.40,973.45 175.99,973.45" fill="none" stroke="#ececec" stroke-width="1.6" stroke-linejoin="miter"/><polygon points="236.02,957.64 236.02,973.45 220.44,973.45" fill="none" stroke="#ececec" stroke-width="1.6" stroke-linejoin="miter"/><polygon points="188.36,899.20 208.07,899.20 198.21,890.04" fill="none" stroke="#ececec" stroke-width="1.6" stroke-linejoin="miter"/><polygon points="188.36,971.38 208.07,971.38 198.21,980.55" fill="none" stroke="#ececec" stroke-width="1.6" stroke-linejoin="miter"/><polygon points="162.24,926.70 162.24,944.12 153.07,935.41" fill="none" stroke="#ececec" stroke-width="1.6" stroke-linejoin="miter"/><polygon points="235.33,926.70 235.33,944.12 244.27,935.41" fill="none" stroke="#ececec" stroke-width="1.6" stroke-linejoin="miter"/><polygon points="262.83,904.93 284.37,904.93 273.60,894.62" fill="none" stroke="#ececec" stroke-width="1.6" stroke-linejoin="miter"/><polygon points="262.83,964.74 284.37,964.74 273.60,975.28" fill="none" stroke="#ececec" stroke-width="1.6" stroke-linejoin="miter"/><polygon points="304.77,904.93 326.31,904.93 315.54,894.62" fill="none" stroke="#ececec" stroke-width="1.6" stroke-linejoin="miter"/><polygon points="304.77,964.74 326.31,964.74 315.54,975.28" fill="none" stroke="#ececec" stroke-width="1.6" stroke-linejoin="miter"/><polyline points="193.63,918.91 198.21,914.33 202.80,918.91" fill="none" stroke="#ececec" stroke-width="1.1"/><polyline points="193.63,952.59 198.21,957.18 202.80,952.59" fill="none" stroke="#ececec" stroke-width="1.1"/><polyline points="182.86,930.82 177.13,935.41 182.86,939.99" fill="none" stroke="#ececec" stroke-width="1.1"/><polyline points="214.71,930.82 220.44,935.41 214.71,939.99" fill="none" stroke="#ececec" stroke-width="1.1"/><polyline points="265.12,931.51 273.60,922.80 282.08,931.51" fill="none" stroke="#ececec" stroke-width="1.6"/><polyline points="265.12,938.16 273.60,947.09 282.08,938.16" fill="none" stroke="#ececec" stroke-width="1.6"/><polyline points="307.06,931.51 315.54,922.80 324.01,931.51" fill="none" stroke="#ececec" stroke-width="1.6"/><polyline points="307.06,938.16 315.54,947.09 324.01,938.16" fill="none" stroke="#ececec" stroke-width="1.6"/><path d="M75,847 V871.5 M62.5,859.2 H87.5" stroke="#ececec" stroke-width="1.6"/><path d="M71.5,850.5 L75,846.5 L78.5,850.5 M71.5,868 L75,872 L78.5,868 M66,855.7 L62,859.2 L66,862.7 M84,855.7 L88,859.2 L84,862.7" fill="none" stroke="#ececec" stroke-width="1.6"/></svg>
<svg class="s" style="left:0;top:0" width="1" height="1"><g font-family="Liberation Sans" font-weight="bold" font-size="27.54" fill="#f6f6f8"><text transform="translate(292.77,866.73) scale(1.183,1)" text-anchor="middle">1</text><text transform="translate(312.35,866.73) scale(1.183,1)" text-anchor="middle">5</text><text transform="translate(331.93,866.73) scale(1.183,1)" text-anchor="middle">0</text><text transform="translate(351.51,866.73) scale(1.183,1)" text-anchor="middle">.</text><text transform="translate(371.09,866.73) scale(1.183,1)" text-anchor="middle">0</text><text transform="translate(390.67,866.73) scale(1.183,1)" text-anchor="middle">0</text><text transform="translate(410.25,866.73) scale(1.183,1)" text-anchor="middle">0</text></g></svg>
<div class="t" style="left:142.26px;top:931.00px;font-size:10.5px;color:#ececec;">X</div>
<div class="t" style="left:194.77px;top:985.00px;font-size:10.5px;color:#ececec;">Y</div>
<div class="t" style="left:269.17px;top:985.00px;font-size:10.5px;color:#ececec;">Z</div>
<div class="t" style="left:311.48px;top:985.00px;font-size:10.5px;color:#ececec;">A</div>
<div class="a" style="left:433px;top:77px;width:995px;height:614px;background:#000;border:1px solid #0c400c;border-radius:6px"></div>
<svg class="s" style="left:0px;top:0px;" width="1440" height="700" viewBox="0 0 1440 700"><rect x="442.6" y="94.7" width="9" height="589.5" fill="#333" stroke="#8a8a8a" stroke-width="1"/><rect x="455.7" y="94.7" width="9" height="589.5" fill="#333" stroke="#8a8a8a" stroke-width="1"/><rect x="468.6" y="94.7" width="9" height="589.5" fill="#333" stroke="#8a8a8a" stroke-width="1"/><rect x="481.7" y="94.7" width="9" height="589.5" fill="#333" stroke="#8a8a8a" stroke-width="1"/><path d="M469.5,388.8 H477 M482.5,388.8 H490" stroke="#b0b0b0" stroke-width="2"/><path d="M443.5,683 H451 M456.5,683 H464" stroke="#b0b0b0" stroke-width="2"/><path d="M589.5,176.5 H1289.5 V596.5" fill="none" stroke="#e08000" stroke-width="1" stroke-dasharray="2 2 1 2"/><path d="M589.5,176.5 V380" fill="none" stroke="#e08000" stroke-width="1" stroke-dasharray="2 2 1 2"/><path d="M589.5,380 V596" fill="none" stroke="#d07800" stroke-width="1" stroke-dasharray="1.5 3"/><path d="M589.5,382 V596" fill="none" stroke="#22aa22" stroke-width="1" stroke-dasharray="1.2 3.3" stroke-dashoffset="2"/><defs><linearGradient id="bot" x1="589" y1="0" x2="1290" y2="0" gradientUnits="userSpaceOnUse"><stop offset="0" stop-color="#e81a0a"/><stop offset="0.45" stop-color="#e85a08"/><stop offset="1" stop-color="#f08a00"/></linearGradient></defs><path d="M592,596.5 H1289.5" fill="none" stroke="url(#bot)" stroke-width="1.2" stroke-dasharray="3 1 1.5 1"/><path d="M605.8,191.8h1.4v1.4h-1.4zM605.8,209.8h1.4v1.4h-1.4zM605.8,227.8h1.4v1.4h-1.4zM605.8,244.8h1.4v1.4h-1.4zM605.8,262.8h1.4v1.4h-1.4zM605.8,279.8h1.4v1.4h-1.4zM605.8,297.8h1.4v1.4h-1.4zM605.8,314.8h1.4v1.4h-1.4zM605.8,332.8h1.4v1.4h-1.4zM605.8,349.8h1.4v1.4h-1.4zM605.8,367.8h1.4v1.4h-1.4zM605.8,384.8h1.4v1.4h-1.4zM605.8,402.8h1.4v1.4h-1.4zM605.8,420.8h1.4v1.4h-1.4zM605.8,437.8h1.4v1.4h-1.4zM605.8,455.8h1.4v1.4h-1.4zM605.8,472.8h1.4v1.4h-1.4zM605.8,490.8h1.4v1.4h-1.4zM605.8,507.8h1.4v1.4h-1.4zM605.8,525.8h1.4v1.4h-1.4zM605.8,542.8h1.4v1.4h-1.4zM605.8,560.8h1.4v1.4h-1.4zM605.8,577.8h1.4v1.4h-1.4zM622.8,191.8h1.4v1.4h-1.4zM622.8,209.8h1.4v1.4h-1.4zM622.8,227.8h1.4v1.4h-1.4zM622.8,244.8h1.4v1.4h-1.4zM622.8,262.8h1.4v1.4h-1.4zM622.8,279.8h1.4v1.4h-1.4zM622.8,297.8h1.4v1.4h-1.4zM622.8,314.8h1.4v1.4h-1.4zM622.8,332.8h1.4v1.4h-1.4zM622.8,349.8h1.4v1.4h-1.4zM622.8,367.8h1.4v1.4h-1.4zM622.8,384.8h1.4v1.4h-1.4zM622.8,402.8h1.4v1.4h-1.4zM622.8,420.8h1.4v1.4h-1.4zM622.8,437.8h1.4v1.4h-1.4zM622.8,455.8h1.4v1.4h-1.4zM622.8,472.8h1.4v1.4h-1.4zM622.8,490.8h1.4v1.4h-1.4zM622.8,507.8h1.4v1.4h-1.4zM622.8,525.8h1.4v1.4h-1.4zM622.8,542.8h1.4v1.4h-1.4zM622.8,560.8h1.4v1.4h-1.4zM622.8,577.8h1.4v1.4h-1.4zM640.8,191.8h1.4v1.4h-1.4zM640.8,209.8h1.4v1.4h-1.4zM640.8,227.8h1.4v1.4h-1.4zM640.8,244.8h1.4v1.4h-1.4zM640.8,262.8h1.4v1.4h-1.4zM640.8,279.8h1.4v1.4h-1.4zM640.8,297.8h1.4v1.4h-1.4zM640.8,314.8h1.4v1.4h-1.4zM640.8,332.8h1.4v1.4h-1.4zM640.8,349.8h1.4v1.4h-1.4zM640.8,367.8h1.4v1.4h-1.4zM640.8,384.8h1.4v1.4h-1.4zM640.8,402.8h1.4v1.4h-1.4zM640.8,420.8h1.4v1.4h-1.4zM640.8,437.8h1.4v1.4h-1.4zM640.8,455.8h1.4v1.4h-1.4zM640.8,472.8h1.4v1.4h-1.4zM640.8,490.8h1.4v1.4h-1.4zM640.8,507.8h1.4v1.4h-1.4zM640.8,525.8h1.4v1.4h-1.4zM640.8,542.8h1.4v1.4h-1.4zM640.8,560.8h1.4v1.4h-1.4zM640.8,577.8h1.4v1.4h-1.4zM658.8,191.8h1.4v1.4h-1.4zM658.8,209.8h1.4v1.4h-1.4zM658.8,227.8h1.4v1.4h-1.4zM658.8,244.8h1.4v1.4h-1.4zM658.8,262.8h1.4v1.4h-1.4zM658.8,279.8h1.4v1.4h-1.4zM658.8,297.8h1.4v1.4h-1.4zM658.8,314.8h1.4v1.4h-1.4zM658.8,332.8h1.4v1.4h-1.4zM658.8,349.8h1.4v1.4h-1.4zM658.8,367.8h1.4v1.4h-1.4zM658.8,384.8h1.4v1.4h-1.4zM658.8,402.8h1.4v1.4h-1.4zM658.8,420.8h1.4v1.4h-1.4zM658.8,437.8h1.4v1.4h-1.4zM658.8,455.8h1.4v1.4h-1.4zM658.8,472.8h1.4v1.4h-1.4zM658.8,490.8h1.4v1.4h-1.4zM658.8,507.8h1.4v1.4h-1.4zM658.8,525.8h1.4v1.4h-1.4zM658.8,542.8h1.4v1.4h-1.4zM658.8,560.8h1.4v1.4h-1.4zM658.8,577.8h1.4v1.4h-1.4zM675.8,191.8h1.4v1.4h-1.4zM675.8,209.8h1.4v1.4h-1.4zM675.8,227.8h1.4v1.4h-1.4zM675.8,244.8h1.4v1.4h-1.4zM675.8,262.8h1.4v1.4h-1.4zM675.8,279.8h1.4v1.4h-1.4zM675.8,297.8h1.4v1.4h-1.4zM675.8,314.8h1.4v1.4h-1.4zM675.8,332.8h1.4v1.4h-1.4zM675.8,349.8h1.4v1.4h-1.4zM675.8,367.8h1.4v1.4h-1.4zM675.8,384.8h1.4v1.4h-1.4zM675.8,402.8h1.4v1.4h-1.4zM675.8,420.8h1.4v1.4h-1.4zM675.8,437.8h1.4v1.4h-1.4zM675.8,455.8h1.4v1.4h-1.4zM675.8,472.8h1.4v1.4h-1.4zM675.8,490.8h1.4v1.4h-1.4zM675.8,507.8h1.4v1.4h-1.4zM675.8,525.8h1.4v1.4h-1.4zM675.8,542.8h1.4v1.4h-1.4zM675.8,560.8h1.4v1.4h-1.4zM675.8,577.8h1.4v1.4h-1.4zM693.8,191.8h1.4v1.4h-1.4zM693.8,209.8h1.4v1.4h-1.4zM693.8,227.8h1.4v1.4h-1.4zM693.8,244.8h1.4v1.4h-1.4zM693.8,262.8h1.4v1.4h-1.4zM693.8,279.8h1.4v1.4h-1.4zM693.8,297.8h1.4v1.4h-1.4zM693.8,314.8h1.4v1.4h-1.4zM693.8,332.8h1.4v1.4h-1.4zM693.8,349.8h1.4v1.4h-1.4zM693.8,367.8h1.4v1.4h-1.4zM693.8,384.8h1.4v1.4h-1.4zM693.8,402.8h1.4v1.4h-1.4zM693.8,420.8h1.4v1.4h-1.4zM693.8,437.8h1.4v1.4h-1.4zM693.8,455.8h1.4v1.4h-1.4zM693.8,472.8h1.4v1.4h-1.4zM693.8,490.8h1.4v1.4h-1.4zM693.8,507.8h1.4v1.4h-1.4zM693.8,525.8h1.4v1.4h-1.4zM693.8,542.8h1.4v1.4h-1.4zM693.8,560.8h1.4v1.4h-1.4zM693.8,577.8h1.4v1.4h-1.4zM710.8,191.8h1.4v1.4h-1.4zM710.8,209.8h1.4v1.4h-1.4zM710.8,227.8h1.4v1.4h-1.4zM710.8,244.8h1.4v1.4h-1.4zM710.8,262.8h1.4v1.4h-1.4zM710.8,279.8h1.4v1.4h-1.4zM710.8,297.8h1.4v1.4h-1.4zM710.8,314.8h1.4v1.4h-1.4zM710.8,332.8h1.4v1.4h-1.4zM710.8,349.8h1.4v1.4h-1.4zM710.8,367.8h1.4v1.4h-1.4zM710.8,384.8h1.4v1.4h-1.4zM710.8,402.8h1.4v1.4h-1.4zM710.8,420.8h1.4v1.4h-1.4zM710.8,437.8h1.4v1.4h-1.4zM710.8,455.8h1.4v1.4h-1.4zM710.8,472.8h1.4v1.4h-1.4zM710.8,490.8h1.4v1.4h-1.4zM710.8,507.8h1.4v1.4h-1.4zM710.8,525.8h1.4v1.4h-1.4zM710.8,542.8h1.4v1.4h-1.4zM710.8,560.8h1.4v1.4h-1.4zM710.8,577.8h1.4v1.4h-1.4zM728.8,191.8h1.4v1.4h-1.4zM728.8,209.8h1.4v1.4h-1.4zM728.8,227.8h1.4v1.4h-1.4zM728.8,244.8h1.4v1.4h-1.4zM728.8,262.8h1.4v1.4h-1.4zM728.8,279.8h1.4v1.4h-1.4zM728.8,297.8h1.4v1.4h-1.4zM728.8,314.8h1.4v1.4h-1.4zM728.8,332.8h1.4v1.4h-1.4zM728.8,349.8h1.4v1.4h-1.4zM728.8,367.8h1.4v1.4h-1.4zM728.8,384.8h1.4v1.4h-1.4zM728.8,402.8h1.4v1.4h-1.4zM728.8,420.8h1.4v1.4h-1.4zM728.8,437.8h1.4v1.4h-1.4zM728.8,455.8h1.4v1.4h-1.4zM728.8,472.8h1.4v1.4h-1.4zM728.8,490.8h1.4v1.4h-1.4zM728.8,507.8h1.4v1.4h-1.4zM728.8,525.8h1.4v1.4h-1.4zM728.8,542.8h1.4v1.4h-1.4zM728.8,560.8h1.4v1.4h-1.4zM728.8,577.8h1.4v1.4h-1.4zM745.8,191.8h1.4v1.4h-1.4zM745.8,209.8h1.4v1.4h-1.4zM745.8,227.8h1.4v1.4h-1.4zM745.8,244.8h1.4v1.4h-1.4zM745.8,262.8h1.4v1.4h-1.4zM745.8,279.8h1.4v1.4h-1.4zM745.8,297.8h1.4v1.4h-1.4zM745.8,314.8h1.4v1.4h-1.4zM745.8,332.8h1.4v1.4h-1.4zM745.8,349.8h1.4v1.4h-1.4zM745.8,367.8h1.4v1.4h-1.4zM745.8,384.8h1.4v1.4h-1.4zM745.8,402.8h1.4v1.4h-1.4zM745.8,420.8h1.4v1.4h-1.4zM745.8,437.8h1.4v1.4h-1.4zM745.8,455.8h1.4v1.4h-1.4zM745.8,472.8h1.4v1.4h-1.4zM745.8,490.8h1.4v1.4h-1.4zM745.8,507.8h1.4v1.4h-1.4zM745.8,525.8h1.4v1.4h-1.4zM745.8,542.8h1.4v1.4h-1.4zM745.8,560.8h1.4v1.4h-1.4zM745.8,577.8h1.4v1.4h-1.4zM763.8,191.8h1.4v1.4h-1.4zM763.8,209.8h1.4v1.4h-1.4zM763.8,227.8h1.4v1.4h-1.4zM763.8,244.8h1.4v1.4h-1.4zM763.8,262.8h1.4v1.4h-1.4zM763.8,279.8h1.4v1.4h-1.4zM763.8,297.8h1.4v1.4h-1.4zM763.8,314.8h1.4v1.4h-1.4zM763.8,332.8h1.4v1.4h-1.4zM763.8,349.8h1.4v1.4h-1.4zM763.8,367.8h1.4v1.4h-1.4zM763.8,384.8h1.4v1.4h-1.4zM763.8,402.8h1.4v1.4h-1.4zM763.8,420.8h1.4v1.4h-1.4zM763.8,437.8h1.4v1.4h-1.4zM763.8,455.8h1.4v1.4h-1.4zM763.8,472.8h1.4v1.4h-1.4zM763.8,490.8h1.4v1.4h-1.4zM763.8,507.8h1.4v1.4h-1.4zM763.8,525.8h1.4v1.4h-1.4zM763.8,542.8h1.4v1.4h-1.4zM763.8,560.8h1.4v1.4h-1.4zM763.8,577.8h1.4v1.4h-1.4zM781.8,191.8h1.4v1.4h-1.4zM781.8,209.8h1.4v1.4h-1.4zM781.8,227.8h1.4v1.4h-1.4zM781.8,244.8h1.4v1.4h-1.4zM781.8,262.8h1.4v1.4h-1.4zM781.8,279.8h1.4v1.4h-1.4zM781.8,297.8h1.4v1.4h-1.4zM781.8,314.8h1.4v1.4h-1.4zM781.8,332.8h1.4v1.4h-1.4zM781.8,349.8h1.4v1.4h-1.4zM781.8,367.8h1.4v1.4h-1.4zM781.8,384.8h1.4v1.4h-1.4zM781.8,402.8h1.4v1.4h-1.4zM781.8,420.8h1.4v1.4h-1.4zM781.8,437.8h1.4v1.4h-1.4zM781.8,455.8h1.4v1.4h-1.4zM781.8,472.8h1.4v1.4h-1.4zM781.8,490.8h1.4v1.4h-1.4zM781.8,507.8h1.4v1.4h-1.4zM781.8,525.8h1.4v1.4h-1.4zM781.8,542.8h1.4v1.4h-1.4zM781.8,560.8h1.4v1.4h-1.4zM781.8,577.8h1.4v1.4h-1.4zM798.8,191.8h1.4v1.4h-1.4zM798.8,209.8h1.4v1.4h-1.4zM798.8,227.8h1.4v1.4h-1.4zM798.8,244.8h1.4v1.4h-1.4zM798.8,262.8h1.4v1.4h-1.4zM798.8,279.8h1.4v1.4h-1.4zM798.8,297.8h1.4v1.4h-1.4zM798.8,314.8h1.4v1.4h-1.4zM798.8,332.8h1.4v1.4h-1.4zM798.8,349.8h1.4v1.4h-1.4zM798.8,367.8h1.4v1.4h-1.4zM798.8,384.8h1.4v1.4h-1.4zM798.8,402.8h1.4v1.4h-1.4zM798.8,420.8h1.4v1.4h-1.4zM798.8,437.8h1.4v1.4h-1.4zM798.8,455.8h1.4v1.4h-1.4zM798.8,472.8h1.4v1.4h-1.4zM798.8,490.8h1.4v1.4h-1.4zM798.8,507.8h1.4v1.4h-1.4zM798.8,525.8h1.4v1.4h-1.4zM798.8,542.8h1.4v1.4h-1.4zM798.8,560.8h1.4v1.4h-1.4zM798.8,577.8h1.4v1.4h-1.4zM816.8,191.8h1.4v1.4h-1.4zM816.8,209.8h1.4v1.4h-1.4zM816.8,227.8h1.4v1.4h-1.4zM816.8,244.8h1.4v1.4h-1.4zM816.8,262.8h1.4v1.4h-1.4zM816.8,279.8h1.4v1.4h-1.4zM816.8,297.8h1.4v1.4h-1.4zM816.8,314.8h1.4v1.4h-1.4zM816.8,332.8h1.4v1.4h-1.4zM816.8,349.8h1.4v1.4h-1.4zM816.8,367.8h1.4v1.4h-1.4zM816.8,384.8h1.4v1.4h-1.4zM816.8,402.8h1.4v1.4h-1.4zM816.8,420.8h1.4v1.4h-1.4zM816.8,437.8h1.4v1.4h-1.4zM816.8,455.8h1.4v1.4h-1.4zM816.8,472.8h1.4v1.4h-1.4zM816.8,490.8h1.4v1.4h-1.4zM816.8,507.8h1.4v1.4h-1.4zM816.8,525.8h1.4v1.4h-1.4zM816.8,542.8h1.4v1.4h-1.4zM816.8,560.8h1.4v1.4h-1.4zM816.8,577.8h1.4v1.4h-1.4zM833.8,191.8h1.4v1.4h-1.4zM833.8,209.8h1.4v1.4h-1.4zM833.8,227.8h1.4v1.4h-1.4zM833.8,244.8h1.4v1.4h-1.4zM833.8,262.8h1.4v1.4h-1.4zM833.8,279.8h1.4v1.4h-1.4zM833.8,297.8h1.4v1.4h-1.4zM833.8,314.8h1.4v1.4h-1.4zM833.8,332.8h1.4v1.4h-1.4zM833.8,349.8h1.4v1.4h-1.4zM833.8,367.8h1.4v1.4h-1.4zM833.8,384.8h1.4v1.4h-1.4zM833.8,402.8h1.4v1.4h-1.4zM833.8,420.8h1.4v1.4h-1.4zM833.8,437.8h1.4v1.4h-1.4zM833.8,455.8h1.4v1.4h-1.4zM833.8,472.8h1.4v1.4h-1.4zM833.8,490.8h1.4v1.4h-1.4zM833.8,507.8h1.4v1.4h-1.4zM833.8,525.8h1.4v1.4h-1.4zM833.8,542.8h1.4v1.4h-1.4zM833.8,560.8h1.4v1.4h-1.4zM833.8,577.8h1.4v1.4h-1.4zM851.8,191.8h1.4v1.4h-1.4zM851.8,209.8h1.4v1.4h-1.4zM851.8,227.8h1.4v1.4h-1.4zM851.8,244.8h1.4v1.4h-1.4zM851.8,262.8h1.4v1.4h-1.4zM851.8,279.8h1.4v1.4h-1.4zM851.8,297.8h1.4v1.4h-1.4zM851.8,314.8h1.4v1.4h-1.4zM851.8,332.8h1.4v1.4h-1.4zM851.8,349.8h1.4v1.4h-1.4zM851.8,367.8h1.4v1.4h-1.4zM851.8,384.8h1.4v1.4h-1.4zM851.8,402.8h1.4v1.4h-1.4zM851.8,420.8h1.4v1.4h-1.4zM851.8,437.8h1.4v1.4h-1.4zM851.8,455.8h1.4v1.4h-1.4zM851.8,472.8h1.4v1.4h-1.4zM851.8,490.8h1.4v1.4h-1.4zM851.8,507.8h1.4v1.4h-1.4zM851.8,525.8h1.4v1.4h-1.4zM851.8,542.8h1.4v1.4h-1.4zM851.8,560.8h1.4v1.4h-1.4zM851.8,577.8h1.4v1.4h-1.4zM869.8,191.8h1.4v1.4h-1.4zM869.8,209.8h1.4v1.4h-1.4zM869.8,227.8h1.4v1.4h-1.4zM869.8,244.8h1.4v1.4h-1.4zM869.8,262.8h1.4v1.4h-1.4zM869.8,279.8h1.4v1.4h-1.4zM869.8,297.8h1.4v1.4h-1.4zM869.8,314.8h1.4v1.4h-1.4zM869.8,332.8h1.4v1.4h-1.4zM869.8,349.8h1.4v1.4h-1.4zM869.8,367.8h1.4v1.4h-1.4zM869.8,384.8h1.4v1.4h-1.4zM869.8,402.8h1.4v1.4h-1.4zM869.8,420.8h1.4v1.4h-1.4zM869.8,437.8h1.4v1.4h-1.4zM869.8,455.8h1.4v1.4h-1.4zM869.8,472.8h1.4v1.4h-1.4zM869.8,490.8h1.4v1.4h-1.4zM869.8,507.8h1.4v1.4h-1.4zM869.8,525.8h1.4v1.4h-1.4zM869.8,542.8h1.4v1.4h-1.4zM869.8,560.8h1.4v1.4h-1.4zM869.8,577.8h1.4v1.4h-1.4zM886.8,191.8h1.4v1.4h-1.4zM886.8,209.8h1.4v1.4h-1.4zM886.8,227.8h1.4v1.4h-1.4zM886.8,244.8h1.4v1.4h-1.4zM886.8,262.8h1.4v1.4h-1.4zM886.8,279.8h1.4v1.4h-1.4zM886.8,297.8h1.4v1.4h-1.4zM886.8,314.8h1.4v1.4h-1.4zM886.8,332.8h1.4v1.4h-1.4zM886.8,349.8h1.4v1.4h-1.4zM886.8,367.8h1.4v1.4h-1.4zM886.8,384.8h1.4v1.4h-1.4zM886.8,402.8h1.4v1.4h-1.4zM886.8,420.8h1.4v1.4h-1.4zM886.8,437.8h1.4v1.4h-1.4zM886.8,455.8h1.4v1.4h-1.4zM886.8,472.8h1.4v1.4h-1.4zM886.8,490.8h1.4v1.4h-1.4zM886.8,507.8h1.4v1.4h-1.4zM886.8,525.8h1.4v1.4h-1.4zM886.8,542.8h1.4v1.4h-1.4zM886.8,560.8h1.4v1.4h-1.4zM886.8,577.8h1.4v1.4h-1.4zM904.8,191.8h1.4v1.4h-1.4zM904.8,209.8h1.4v1.4h-1.4zM904.8,227.8h1.4v1.4h-1.4zM904.8,244.8h1.4v1.4h-1.4zM904.8,262.8h1.4v1.4h-1.4zM904.8,279.8h1.4v1.4h-1.4zM904.8,297.8h1.4v1.4h-1.4zM904.8,314.8h1.4v1.4h-1.4zM904.8,332.8h1.4v1.4h-1.4zM904.8,349.8h1.4v1.4h-1.4zM904.8,367.8h1.4v1.4h-1.4zM904.8,384.8h1.4v1.4h-1.4zM904.8,402.8h1.4v1.4h-1.4zM904.8,420.8h1.4v1.4h-1.4zM904.8,437.8h1.4v1.4h-1.4zM904.8,455.8h1.4v1.4h-1.4zM904.8,472.8h1.4v1.4h-1.4zM904.8,490.8h1.4v1.4h-1.4zM904.8,507.8h1.4v1.4h-1.4zM904.8,525.8h1.4v1.4h-1.4zM904.8,542.8h1.4v1.4h-1.4zM904.8,560.8h1.4v1.4h-1.4zM904.8,577.8h1.4v1.4h-1.4zM921.8,191.8h1.4v1.4h-1.4zM921.8,209.8h1.4v1.4h-1.4zM921.8,227.8h1.4v1.4h-1.4zM921.8,244.8h1.4v1.4h-1.4zM921.8,262.8h1.4v1.4h-1.4zM921.8,279.8h1.4v1.4h-1.4zM921.8,297.8h1.4v1.4h-1.4zM921.8,314.8h1.4v1.4h-1.4zM921.8,332.8h1.4v1.4h-1.4zM921.8,349.8h1.4v1.4h-1.4zM921.8,367.8h1.4v1.4h-1.4zM921.8,384.8h1.4v1.4h-1.4zM921.8,402.8h1.4v1.4h-1.4zM921.8,420.8h1.4v1.4h-1.4zM921.8,437.8h1.4v1.4h-1.4zM921.8,455.8h1.4v1.4h-1.4zM921.8,472.8h1.4v1.4h-1.4zM921.8,490.8h1.4v1.4h-1.4zM921.8,507.8h1.4v1.4h-1.4zM921.8,525.8h1.4v1.4h-1.4zM921.8,542.8h1.4v1.4h-1.4zM921.8,560.8h1.4v1.4h-1.4zM921.8,577.8h1.4v1.4h-1.4zM939.8,191.8h1.4v1.4h-1.4zM939.8,209.8h1.4v1.4h-1.4zM939.8,227.8h1.4v1.4h-1.4zM939.8,244.8h1.4v1.4h-1.4zM939.8,262.8h1.4v1.4h-1.4zM939.8,279.8h1.4v1.4h-1.4zM939.8,297.8h1.4v1.4h-1.4zM939.8,314.8h1.4v1.4h-1.4zM939.8,332.8h1.4v1.4h-1.4zM939.8,349.8h1.4v1.4h-1.4zM939.8,367.8h1.4v1.4h-1.4zM939.8,384.8h1.4v1.4h-1.4zM939.8,402.8h1.4v1.4h-1.4zM939.8,420.8h1.4v1.4h-1.4zM939.8,437.8h1.4v1.4h-1.4zM939.8,455.8h1.4v1.4h-1.4zM939.8,472.8h1.4v1.4h-1.4zM939.8,490.8h1.4v1.4h-1.4zM939.8,507.8h1.4v1.4h-1.4zM939.8,525.8h1.4v1.4h-1.4zM939.8,542.8h1.4v1.4h-1.4zM939.8,560.8h1.4v1.4h-1.4zM939.8,577.8h1.4v1.4h-1.4zM956.8,191.8h1.4v1.4h-1.4zM956.8,209.8h1.4v1.4h-1.4zM956.8,227.8h1.4v1.4h-1.4zM956.8,244.8h1.4v1.4h-1.4zM956.8,262.8h1.4v1.4h-1.4zM956.8,279.8h1.4v1.4h-1.4zM956.8,297.8h1.4v1.4h-1.4zM956.8,314.8h1.4v1.4h-1.4zM956.8,332.8h1.4v1.4h-1.4zM956.8,349.8h1.4v1.4h-1.4zM956.8,367.8h1.4v1.4h-1.4zM956.8,384.8h1.4v1.4h-1.4zM956.8,402.8h1.4v1.4h-1.4zM956.8,420.8h1.4v1.4h-1.4zM956.8,437.8h1.4v1.4h-1.4zM956.8,455.8h1.4v1.4h-1.4zM956.8,472.8h1.4v1.4h-1.4zM956.8,490.8h1.4v1.4h-1.4zM956.8,507.8h1.4v1.4h-1.4zM956.8,525.8h1.4v1.4h-1.4zM956.8,542.8h1.4v1.4h-1.4zM956.8,560.8h1.4v1.4h-1.4zM956.8,577.8h1.4v1.4h-1.4zM974.8,191.8h1.4v1.4h-1.4zM974.8,209.8h1.4v1.4h-1.4zM974.8,227.8h1.4v1.4h-1.4zM974.8,244.8h1.4v1.4h-1.4zM974.8,262.8h1.4v1.4h-1.4zM974.8,279.8h1.4v1.4h-1.4zM974.8,297.8h1.4v1.4h-1.4zM974.8,314.8h1.4v1.4h-1.4zM974.8,332.8h1.4v1.4h-1.4zM974.8,349.8h1.4v1.4h-1.4zM974.8,367.8h1.4v1.4h-1.4zM974.8,384.8h1.4v1.4h-1.4zM974.8,402.8h1.4v1.4h-1.4zM974.8,420.8h1.4v1.4h-1.4zM974.8,437.8h1.4v1.4h-1.4zM974.8,455.8h1.4v1.4h-1.4zM974.8,472.8h1.4v1.4h-1.4zM974.8,490.8h1.4v1.4h-1.4zM974.8,507.8h1.4v1.4h-1.4zM974.8,525.8h1.4v1.4h-1.4zM974.8,542.8h1.4v1.4h-1.4zM974.8,560.8h1.4v1.4h-1.4zM974.8,577.8h1.4v1.4h-1.4zM992.8,191.8h1.4v1.4h-1.4zM992.8,209.8h1.4v1.4h-1.4zM992.8,227.8h1.4v1.4h-1.4zM992.8,244.8h1.4v1.4h-1.4zM992.8,262.8h1.4v1.4h-1.4zM992.8,279.8h1.4v1.4h-1.4zM992.8,297.8h1.4v1.4h-1.4zM992.8,314.8h1.4v1.4h-1.4zM992.8,332.8h1.4v1.4h-1.4zM992.8,349.8h1.4v1.4h-1.4zM992.8,367.8h1.4v1.4h-1.4zM992.8,384.8h1.4v1.4h-1.4zM992.8,402.8h1.4v1.4h-1.4zM992.8,420.8h1.4v1.4h-1.4zM992.8,437.8h1.4v1.4h-1.4zM992.8,455.8h1.4v1.4h-1.4zM992.8,472.8h1.4v1.4h-1.4zM992.8,490.8h1.4v1.4h-1.4zM992.8,507.8h1.4v1.4h-1.4zM992.8,525.8h1.4v1.4h-1.4zM992.8,542.8h1.4v1.4h-1.4zM992.8,560.8h1.4v1.4h-1.4zM992.8,577.8h1.4v1.4h-1.4zM1009.8,191.8h1.4v1.4h-1.4zM1009.8,209.8h1.4v1.4h-1.4zM1009.8,227.8h1.4v1.4h-1.4zM1009.8,244.8h1.4v1.4h-1.4zM1009.8,262.8h1.4v1.4h-1.4zM1009.8,279.8h1.4v1.4h-1.4zM1009.8,297.8h1.4v1.4h-1.4zM1009.8,314.8h1.4v1.4h-1.4zM1009.8,332.8h1.4v1.4h-1.4zM1009.8,349.8h1.4v1.4h-1.4zM1009.8,367.8h1.4v1.4h-1.4zM1009.8,384.8h1.4v1.4h-1.4zM1009.8,402.8h1.4v1.4h-1.4zM1009.8,420.8h1.4v1.4h-1.4zM1009.8,437.8h1.4v1.4h-1.4zM1009.8,455.8h1.4v1.4h-1.4zM1009.8,472.8h1.4v1.4h-1.4zM1009.8,490.8h1.4v1.4h-1.4zM1009.8,507.8h1.4v1.4h-1.4zM1009.8,525.8h1.4v1.4h-1.4zM1009.8,542.8h1.4v1.4h-1.4zM1009.8,560.8h1.4v1.4h-1.4zM1009.8,577.8h1.4v1.4h-1.4zM1027.8,191.8h1.4v1.4h-1.4zM1027.8,209.8h1.4v1.4h-1.4zM1027.8,227.8h1.4v1.4h-1.4zM1027.8,244.8h1.4v1.4h-1.4zM1027.8,262.8h1.4v1.4h-1.4zM1027.8,279.8h1.4v1.4h-1.4zM1027.8,297.8h1.4v1.4h-1.4zM1027.8,314.8h1.4v1.4h-1.4zM1027.8,332.8h1.4v1.4h-1.4zM1027.8,349.8h1.4v1.4h-1.4zM1027.8,367.8h1.4v1.4h-1.4zM1027.8,384.8h1.4v1.4h-1.4zM1027.8,402.8h1.4v1.4h-1.4zM1027.8,420.8h1.4v1.4h-1.4zM1027.8,437.8h1.4v1.4h-1.4zM1027.8,455.8h1.4v1.4h-1.4zM1027.8,472.8h1.4v1.4h-1.4zM1027.8,490.8h1.4v1.4h-1.4zM1027.8,507.8h1.4v1.4h-1.4zM1027.8,525.8h1.4v1.4h-1.4zM1027.8,542.8h1.4v1.4h-1.4zM1027.8,560.8h1.4v1.4h-1.4zM1027.8,577.8h1.4v1.4h-1.4zM1044.8,191.8h1.4v1.4h-1.4zM1044.8,209.8h1.4v1.4h-1.4zM1044.8,227.8h1.4v1.4h-1.4zM1044.8,244.8h1.4v1.4h-1.4zM1044.8,262.8h1.4v1.4h-1.4zM1044.8,279.8h1.4v1.4h-1.4zM1044.8,297.8h1.4v1.4h-1.4zM1044.8,314.8h1.4v1.4h-1.4zM1044.8,332.8h1.4v1.4h-1.4zM1044.8,349.8h1.4v1.4h-1.4zM1044.8,367.8h1.4v1.4h-1.4zM1044.8,384.8h1.4v1.4h-1.4zM1044.8,402.8h1.4v1.4h-1.4zM1044.8,420.8h1.4v1.4h-1.4zM1044.8,437.8h1.4v1.4h-1.4zM1044.8,455.8h1.4v1.4h-1.4zM1044.8,472.8h1.4v1.4h-1.4zM1044.8,490.8h1.4v1.4h-1.4zM1044.8,507.8h1.4v1.4h-1.4zM1044.8,525.8h1.4v1.4h-1.4zM1044.8,542.8h1.4v1.4h-1.4zM1044.8,560.8h1.4v1.4h-1.4zM1044.8,577.8h1.4v1.4h-1.4zM1062.8,191.8h1.4v1.4h-1.4zM1062.8,209.8h1.4v1.4h-1.4zM1062.8,227.8h1.4v1.4h-1.4zM1062.8,244.8h1.4v1.4h-1.4zM1062.8,262.8h1.4v1.4h-1.4zM1062.8,279.8h1.4v1.4h-1.4zM1062.8,297.8h1.4v1.4h-1.4zM1062.8,314.8h1.4v1.4h-1.4zM1062.8,332.8h1.4v1.4h-1.4zM1062.8,349.8h1.4v1.4h-1.4zM1062.8,367.8h1.4v1.4h-1.4zM1062.8,384.8h1.4v1.4h-1.4zM1062.8,402.8h1.4v1.4h-1.4zM1062.8,420.8h1.4v1.4h-1.4zM1062.8,437.8h1.4v1.4h-1.4zM1062.8,455.8h1.4v1.4h-1.4zM1062.8,472.8h1.4v1.4h-1.4zM1062.8,490.8h1.4v1.4h-1.4zM1062.8,507.8h1.4v1.4h-1.4zM1062.8,525.8h1.4v1.4h-1.4zM1062.8,542.8h1.4v1.4h-1.4zM1062.8,560.8h1.4v1.4h-1.4zM1062.8,577.8h1.4v1.4h-1.4zM1079.8,191.8h1.4v1.4h-1.4zM1079.8,209.8h1.4v1.4h-1.4zM1079.8,227.8h1.4v1.4h-1.4zM1079.8,244.8h1.4v1.4h-1.4zM1079.8,262.8h1.4v1.4h-1.4zM1079.8,279.8h1.4v1.4h-1.4zM1079.8,297.8h1.4v1.4h-1.4zM1079.8,314.8h1.4v1.4h-1.4zM1079.8,332.8h1.4v1.4h-1.4zM1079.8,349.8h1.4v1.4h-1.4zM1079.8,367.8h1.4v1.4h-1.4zM1079.8,384.8h1.4v1.4h-1.4zM1079.8,402.8h1.4v1.4h-1.4zM1079.8,420.8h1.4v1.4h-1.4zM1079.8,437.8h1.4v1.4h-1.4zM1079.8,455.8h1.4v1.4h-1.4zM1079.8,472.8h1.4v1.4h-1.4zM1079.8,490.8h1.4v1.4h-1.4zM1079.8,507.8h1.4v1.4h-1.4zM1079.8,525.8h1.4v1.4h-1.4zM1079.8,542.8h1.4v1.4h-1.4zM1079.8,560.8h1.4v1.4h-1.4zM1079.8,577.8h1.4v1.4h-1.4zM1097.8,191.8h1.4v1.4h-1.4zM1097.8,209.8h1.4v1.4h-1.4zM1097.8,227.8h1.4v1.4h-1.4zM1097.8,244.8h1.4v1.4h-1.4zM1097.8,262.8h1.4v1.4h-1.4zM1097.8,279.8h1.4v1.4h-1.4zM1097.8,297.8h1.4v1.4h-1.4zM1097.8,314.8h1.4v1.4h-1.4zM1097.8,332.8h1.4v1.4h-1.4zM1097.8,349.8h1.4v1.4h-1.4zM1097.8,367.8h1.4v1.4h-1.4zM1097.8,384.8h1.4v1.4h-1.4zM1097.8,402.8h1.4v1.4h-1.4zM1097.8,420.8h1.4v1.4h-1.4zM1097.8,437.8h1.4v1.4h-1.4zM1097.8,455.8h1.4v1.4h-1.4zM1097.8,472.8h1.4v1.4h-1.4zM1097.8,490.8h1.4v1.4h-1.4zM1097.8,507.8h1.4v1.4h-1.4zM1097.8,525.8h1.4v1.4h-1.4zM1097.8,542.8h1.4v1.4h-1.4zM1097.8,560.8h1.4v1.4h-1.4zM1097.8,577.8h1.4v1.4h-1.4zM1115.8,191.8h1.4v1.4h-1.4zM1115.8,209.8h1.4v1.4h-1.4zM1115.8,227.8h1.4v1.4h-1.4zM1115.8,244.8h1.4v1.4h-1.4zM1115.8,262.8h1.4v1.4h-1.4zM1115.8,279.8h1.4v1.4h-1.4zM1115.8,297.8h1.4v1.4h-1.4zM1115.8,314.8h1.4v1.4h-1.4zM1115.8,332.8h1.4v1.4h-1.4zM1115.8,349.8h1.4v1.4h-1.4zM1115.8,367.8h1.4v1.4h-1.4zM1115.8,384.8h1.4v1.4h-1.4zM1115.8,402.8h1.4v1.4h-1.4zM1115.8,420.8h1.4v1.4h-1.4zM1115.8,437.8h1.4v1.4h-1.4zM1115.8,455.8h1.4v1.4h-1.4zM1115.8,472.8h1.4v1.4h-1.4zM1115.8,490.8h1.4v1.4h-1.4zM1115.8,507.8h1.4v1.4h-1.4zM1115.8,525.8h1.4v1.4h-1.4zM1115.8,542.8h1.4v1.4h-1.4zM1115.8,560.8h1.4v1.4h-1.4zM1115.8,577.8h1.4v1.4h-1.4zM1132.8,191.8h1.4v1.4h-1.4zM1132.8,209.8h1.4v1.4h-1.4zM1132.8,227.8h1.4v1.4h-1.4zM1132.8,244.8h1.4v1.4h-1.4zM1132.8,262.8h1.4v1.4h-1.4zM1132.8,279.8h1.4v1.4h-1.4zM1132.8,297.8h1.4v1.4h-1.4zM1132.8,314.8h1.4v1.4h-1.4zM1132.8,332.8h1.4v1.4h-1.4zM1132.8,349.8h1.4v1.4h-1.4zM1132.8,367.8h1.4v1.4h-1.4zM1132.8,384.8h1.4v1.4h-1.4zM1132.8,402.8h1.4v1.4h-1.4zM1132.8,420.8h1.4v1.4h-1.4zM1132.8,437.8h1.4v1.4h-1.4zM1132.8,455.8h1.4v1.4h-1.4zM1132.8,472.8h1.4v1.4h-1.4zM1132.8,490.8h1.4v1.4h-1.4zM1132.8,507.8h1.4v1.4h-1.4zM1132.8,525.8h1.4v1.4h-1.4zM1132.8,542.8h1.4v1.4h-1.4zM1132.8,560.8h1.4v1.4h-1.4zM1132.8,577.8h1.4v1.4h-1.4zM1150.8,191.8h1.4v1.4h-1.4zM1150.8,209.8h1.4v1.4h-1.4zM1150.8,227.8h1.4v1.4h-1.4zM1150.8,244.8h1.4v1.4h-1.4zM1150.8,262.8h1.4v1.4h-1.4zM1150.8,279.8h1.4v1.4h-1.4zM1150.8,297.8h1.4v1.4h-1.4zM1150.8,314.8h1.4v1.4h-1.4zM1150.8,332.8h1.4v1.4h-1.4zM1150.8,349.8h1.4v1.4h-1.4zM1150.8,367.8h1.4v1.4h-1.4zM1150.8,384.8h1.4v1.4h-1.4zM1150.8,402.8h1.4v1.4h-1.4zM1150.8,420.8h1.4v1.4h-1.4zM1150.8,437.8h1.4v1.4h-1.4zM1150.8,455.8h1.4v1.4h-1.4zM1150.8,472.8h1.4v1.4h-1.4zM1150.8,490.8h1.4v1.4h-1.4zM1150.8,507.8h1.4v1.4h-1.4zM1150.8,525.8h1.4v1.4h-1.4zM1150.8,542.8h1.4v1.4h-1.4zM1150.8,560.8h1.4v1.4h-1.4zM1150.8,577.8h1.4v1.4h-1.4zM1167.8,191.8h1.4v1.4h-1.4zM1167.8,209.8h1.4v1.4h-1.4zM1167.8,227.8h1.4v1.4h-1.4zM1167.8,244.8h1.4v1.4h-1.4zM1167.8,262.8h1.4v1.4h-1.4zM1167.8,279.8h1.4v1.4h-1.4zM1167.8,297.8h1.4v1.4h-1.4zM1167.8,314.8h1.4v1.4h-1.4zM1167.8,332.8h1.4v1.4h-1.4zM1167.8,349.8h1.4v1.4h-1.4zM1167.8,367.8h1.4v1.4h-1.4zM1167.8,384.8h1.4v1.4h-1.4zM1167.8,402.8h1.4v1.4h-1.4zM1167.8,420.8h1.4v1.4h-1.4zM1167.8,437.8h1.4v1.4h-1.4zM1167.8,455.8h1.4v1.4h-1.4zM1167.8,472.8h1.4v1.4h-1.4zM1167.8,490.8h1.4v1.4h-1.4zM1167.8,507.8h1.4v1.4h-1.4zM1167.8,525.8h1.4v1.4h-1.4zM1167.8,542.8h1.4v1.4h-1.4zM1167.8,560.8h1.4v1.4h-1.4zM1167.8,577.8h1.4v1.4h-1.4zM1185.8,191.8h1.4v1.4h-1.4zM1185.8,209.8h1.4v1.4h-1.4zM1185.8,227.8h1.4v1.4h-1.4zM1185.8,244.8h1.4v1.4h-1.4zM1185.8,262.8h1.4v1.4h-1.4zM1185.8,279.8h1.4v1.4h-1.4zM1185.8,297.8h1.4v1.4h-1.4zM1185.8,314.8h1.4v1.4h-1.4zM1185.8,332.8h1.4v1.4h-1.4zM1185.8,349.8h1.4v1.4h-1.4zM1185.8,367.8h1.4v1.4h-1.4zM1185.8,384.8h1.4v1.4h-1.4zM1185.8,402.8h1.4v1.4h-1.4zM1185.8,420.8h1.4v1.4h-1.4zM1185.8,437.8h1.4v1.4h-1.4zM1185.8,455.8h1.4v1.4h-1.4zM1185.8,472.8h1.4v1.4h-1.4zM1185.8,490.8h1.4v1.4h-1.4zM1185.8,507.8h1.4v1.4h-1.4zM1185.8,525.8h1.4v1.4h-1.4zM1185.8,542.8h1.4v1.4h-1.4zM1185.8,560.8h1.4v1.4h-1.4zM1185.8,577.8h1.4v1.4h-1.4zM1203.8,191.8h1.4v1.4h-1.4zM1203.8,209.8h1.4v1.4h-1.4zM1203.8,227.8h1.4v1.4h-1.4zM1203.8,244.8h1.4v1.4h-1.4zM1203.8,262.8h1.4v1.4h-1.4zM1203.8,279.8h1.4v1.4h-1.4zM1203.8,297.8h1.4v1.4h-1.4zM1203.8,314.8h1.4v1.4h-1.4zM1203.8,332.8h1.4v1.4h-1.4zM1203.8,349.8h1.4v1.4h-1.4zM1203.8,367.8h1.4v1.4h-1.4zM1203.8,384.8h1.4v1.4h-1.4zM1203.8,402.8h1.4v1.4h-1.4zM1203.8,420.8h1.4v1.4h-1.4zM1203.8,437.8h1.4v1.4h-1.4zM1203.8,455.8h1.4v1.4h-1.4zM1203.8,472.8h1.4v1.4h-1.4zM1203.8,490.8h1.4v1.4h-1.4zM1203.8,507.8h1.4v1.4h-1.4zM1203.8,525.8h1.4v1.4h-1.4zM1203.8,542.8h1.4v1.4h-1.4zM1203.8,560.8h1.4v1.4h-1.4zM1203.8,577.8h1.4v1.4h-1.4zM1220.8,191.8h1.4v1.4h-1.4zM1220.8,209.8h1.4v1.4h-1.4zM1220.8,227.8h1.4v1.4h-1.4zM1220.8,244.8h1.4v1.4h-1.4zM1220.8,262.8h1.4v1.4h-1.4zM1220.8,279.8h1.4v1.4h-1.4zM1220.8,297.8h1.4v1.4h-1.4zM1220.8,314.8h1.4v1.4h-1.4zM1220.8,332.8h1.4v1.4h-1.4zM1220.8,349.8h1.4v1.4h-1.4zM1220.8,367.8h1.4v1.4h-1.4zM1220.8,384.8h1.4v1.4h-1.4zM1220.8,402.8h1.4v1.4h-1.4zM1220.8,420.8h1.4v1.4h-1.4zM1220.8,437.8h1.4v1.4h-1.4zM1220.8,455.8h1.4v1.4h-1.4zM1220.8,472.8h1.4v1.4h-1.4zM1220.8,490.8h1.4v1.4h-1.4zM1220.8,507.8h1.4v1.4h-1.4zM1220.8,525.8h1.4v1.4h-1.4zM1220.8,542.8h1.4v1.4h-1.4zM1220.8,560.8h1.4v1.4h-1.4zM1220.8,577.8h1.4v1.4h-1.4zM1238.8,191.8h1.4v1.4h-1.4zM1238.8,209.8h1.4v1.4h-1.4zM1238.8,227.8h1.4v1.4h-1.4zM1238.8,244.8h1.4v1.4h-1.4zM1238.8,262.8h1.4v1.4h-1.4zM1238.8,279.8h1.4v1.4h-1.4zM1238.8,297.8h1.4v1.4h-1.4zM1238.8,314.8h1.4v1.4h-1.4zM1238.8,332.8h1.4v1.4h-1.4zM1238.8,349.8h1.4v1.4h-1.4zM1238.8,367.8h1.4v1.4h-1.4zM1238.8,384.8h1.4v1.4h-1.4zM1238.8,402.8h1.4v1.4h-1.4zM1238.8,420.8h1.4v1.4h-1.4zM1238.8,437.8h1.4v1.4h-1.4zM1238.8,455.8h1.4v1.4h-1.4zM1238.8,472.8h1.4v1.4h-1.4zM1238.8,490.8h1.4v1.4h-1.4zM1238.8,507.8h1.4v1.4h-1.4zM1238.8,525.8h1.4v1.4h-1.4zM1238.8,542.8h1.4v1.4h-1.4zM1238.8,560.8h1.4v1.4h-1.4zM1238.8,577.8h1.4v1.4h-1.4zM1255.8,191.8h1.4v1.4h-1.4zM1255.8,209.8h1.4v1.4h-1.4zM1255.8,227.8h1.4v1.4h-1.4zM1255.8,244.8h1.4v1.4h-1.4zM1255.8,262.8h1.4v1.4h-1.4zM1255.8,279.8h1.4v1.4h-1.4zM1255.8,297.8h1.4v1.4h-1.4zM1255.8,314.8h1.4v1.4h-1.4zM1255.8,332.8h1.4v1.4h-1.4zM1255.8,349.8h1.4v1.4h-1.4zM1255.8,367.8h1.4v1.4h-1.4zM1255.8,384.8h1.4v1.4h-1.4zM1255.8,402.8h1.4v1.4h-1.4zM1255.8,420.8h1.4v1.4h-1.4zM1255.8,437.8h1.4v1.4h-1.4zM1255.8,455.8h1.4v1.4h-1.4zM1255.8,472.8h1.4v1.4h-1.4zM1255.8,490.8h1.4v1.4h-1.4zM1255.8,507.8h1.4v1.4h-1.4zM1255.8,525.8h1.4v1.4h-1.4zM1255.8,542.8h1.4v1.4h-1.4zM1255.8,560.8h1.4v1.4h-1.4zM1255.8,577.8h1.4v1.4h-1.4zM1273.8,191.8h1.4v1.4h-1.4zM1273.8,209.8h1.4v1.4h-1.4zM1273.8,227.8h1.4v1.4h-1.4zM1273.8,244.8h1.4v1.4h-1.4zM1273.8,262.8h1.4v1.4h-1.4zM1273.8,279.8h1.4v1.4h-1.4zM1273.8,297.8h1.4v1.4h-1.4zM1273.8,314.8h1.4v1.4h-1.4zM1273.8,332.8h1.4v1.4h-1.4zM1273.8,349.8h1.4v1.4h-1.4zM1273.8,367.8h1.4v1.4h-1.4zM1273.8,384.8h1.4v1.4h-1.4zM1273.8,402.8h1.4v1.4h-1.4zM1273.8,420.8h1.4v1.4h-1.4zM1273.8,437.8h1.4v1.4h-1.4zM1273.8,455.8h1.4v1.4h-1.4zM1273.8,472.8h1.4v1.4h-1.4zM1273.8,490.8h1.4v1.4h-1.4zM1273.8,507.8h1.4v1.4h-1.4zM1273.8,525.8h1.4v1.4h-1.4zM1273.8,542.8h1.4v1.4h-1.4zM1273.8,560.8h1.4v1.4h-1.4zM1273.8,577.8h1.4v1.4h-1.4z" fill="#c4c4c4"/><path d="M589,595 V578" stroke="#1a8a1a" stroke-width="2"/><path d="M587,581 L589,576 L591,581" fill="none" stroke="#1a8a1a" stroke-width="1"/><path d="M587,576 L589,571.5 L591,576" fill="none" stroke="#1a8a1a" stroke-width="1"/><path d="M591,595.8 H605" stroke="#d01010" stroke-width="2"/><path d="M603,593.5 L606,595.8 L603,598" fill="none" stroke="#d01010" stroke-width="1"/><rect x="607" y="594" width="3.5" height="3.5" fill="none" stroke="#e01010" stroke-width="1.2"/><path d="M588,595 A1.8,1.8 0 1 0 590,597.5" fill="none" stroke="#2233ff" stroke-width="1"/></svg>
<div class="t" style="left:443.32px;top:84.00px;font-size:11px;color:#9a9a9a;">X</div>
<div class="t" style="left:456.33px;top:84.00px;font-size:11px;color:#9a9a9a;">Y</div>
<div class="t" style="left:469.64px;top:84.00px;font-size:11px;color:#9a9a9a;">Z</div>
<div class="t" style="left:482.33px;top:84.00px;font-size:11px;color:#9a9a9a;">A</div>
<div class="a" style="left:433px;top:717px;width:995px;height:239px;background:#1f2a30;border:1px solid #0c400c;border-radius:0 6px 6px 6px"></div>
<div class="a" style="left:433px;top:697px;width:77px;height:21px;background:#1f2a30;border:1px solid #0c400c;border-bottom:none;border-radius:6px 6px 0 0"></div>
<div class="t" style="left:455.26px;top:702.00px;font-size:11.5px;color:#ececec;letter-spacing:0.561px;">Output</div>
<div class="t" style="left:514.76px;top:702.00px;font-size:11.5px;color:#d2d2d2;letter-spacing:-0.122px;">Edit GCode</div>
<svg class="s" style="left:0px;top:0px;" width="1440" height="1032" viewBox="0 0 1440 1032"><path d="M438,748.3 H1423" stroke="#0d470d" stroke-width="1"/><rect x="438.5" y="720.5" width="27" height="27" rx="3" fill="#5c4b2b"/><path d="M453,724.5 L461.5,733 L458.5,734 L455,737.5 L455,741 L447,733 L450.5,733 L454,729.5 Z" fill="#f4f4f4"/><path d="M450.5,737 L443,744.5" stroke="#f4f4f4" stroke-width="1.6"/><rect x="504.5" y="726" width="11" height="16" rx="1.5" fill="none" stroke="#f0f0f0" stroke-width="1.5"/><rect x="507.5" y="724.8" width="5" height="2.5" rx="1" fill="#f0f0f0"/><path d="M511,729 V741 M518.5,729 V743 M509,743 H518" stroke="#e0e0e0" stroke-width="1" stroke-dasharray="1.2 1"/><path d="M535.5,728 H549 L547,742 H537.5 Z" fill="none" stroke="#f0f0f0" stroke-width="1.3"/><defs><pattern id="chk" width="2" height="2" patternUnits="userSpaceOnUse"><rect width="1" height="1" fill="#e8e8e8"/><rect x="1" y="1" width="1" height="1" fill="#e8e8e8"/></pattern></defs><path d="M536.5,730 H548 L546.3,741 H538.2 Z" fill="url(#chk)"/><rect x="441.5" y="941" width="187" height="7.5" rx="3.7" fill="#010c03"/></svg>
<div class="t" style="left:436.5px;top:757px;font-size:12.5px;font-family:'Liberation Mono',monospace;color:#ffa500;font-weight:bold;font-style:italic;">Python unavailable</div>
<div class="t" style="left:436.5px;top:773px;font-size:12.5px;font-family:'Liberation Mono',monospace;color:#ffa500;font-weight:bold;font-style:italic;">Audio warning:</div>
<div class="t" style="left:436.5px;top:789px;font-size:12.5px;font-family:'Liberation Mono',monospace;color:#ffa500;font-weight:bold;font-style:italic;">  No such device: Headphones (Soundcore Sport X10)</div>
<div class="t" style="left:436.5px;top:805px;font-size:12.5px;font-family:'Liberation Mono',monospace;color:#ffa500;font-weight:bold;font-style:italic;">  No such device: Headphones (Soundcore Sport X10)</div>
<div class="t" style="left:436.5px;top:821px;font-size:12.5px;font-family:'Liberation Mono',monospace;color:#dedad0;">#OnInit Dlg_15min</div>
<div class="t" style="left:436.5px;top:837px;font-size:12.5px;font-family:'Liberation Mono',monospace;color:#dedad0;">#OnInit Dlg_10min</div>
<div class="t" style="left:436.5px;top:853px;font-size:12.5px;font-family:'Liberation Mono',monospace;color:#dedad0;">#OnInit Dlg_5min</div>
<div class="t" style="left:436.5px;top:869px;font-size:12.5px;font-family:'Liberation Mono',monospace;color:#dedad0;">Warm_Up: #OnInit</div>
<div class="a" style="left:433px;top:962.5px;width:995px;height:39px;background:#1f2a30;border:1px solid #0c400c;border-radius:6px"></div>
<div class="t" style="left:673.22px;top:974.00px;font-size:21.9px;color:#474f57;letter-spacing:0.043px;font-family:'Liberation Mono',monospace;">MDI MDI MDI MDI MDI MDI MDI MDI MDI MDI</div>
<div class="a" style="left:1436px;top:77px;width:433.5px;height:924px;background:#fff;border:1px solid #0c400c;border-radius:6px"></div>
<svg class="s" style="left:0px;top:0px;" width="1920" height="1032" viewBox="0 0 1920 1032"><rect x="1438" y="986" width="428" height="9.7" rx="4.8" fill="#010c03"/><defs><linearGradient id="hd" x1="0" y1="0" x2="0" y2="1"><stop offset="0" stop-color="#f0f0f0"/><stop offset="1" stop-color="#bdbdbd"/></linearGradient></defs><circle cx="1444" cy="990.7" r="6.6" fill="url(#hd)" stroke="#6a6a6a" stroke-width="0.8"/></svg>
<div class="a" style="left:1876px;top:75px;width:41px;height:928px;background:#3a3a3a;border:1px solid #0c400c;border-radius:6px"></div>
<svg class="s" style="left:0px;top:0px;" width="1920" height="1032" viewBox="0 0 1920 1032"><path d="M1880,77.30 H1914" stroke="#0b4a0b" stroke-width="1"/><path d="M1880,81.33 H1914" stroke="#0b4a0b" stroke-width="1"/><path d="M1880,85.36 H1914" stroke="#0b4a0b" stroke-width="1"/><path d="M1880,89.39 H1914" stroke="#0b4a0b" stroke-width="1"/><path d="M1880,93.42 H1914" stroke="#0b4a0b" stroke-width="1"/><rect x="1881" y="100" width="33" height="33.5" fill="#333" stroke="#d8d8d8" stroke-width="1.5"/><path d="M1897.5,101.5 V108" stroke="#f0f0f0" stroke-width="1.6"/><path d="M1893,109 H1902 L1897.5,114.5 Z" fill="#f0f0f0"/><path d="M1893,108.5 L1897.5,105 L1902,108.5" fill="#d0d0d0"/><path d="M1884,131.5 V127 C1884,122.5 1888,120 1892,120 H1903 C1907,120 1911,122.5 1911,127 V131.5 Z" fill="#f0f0f0"/><path d="M1890,118 H1905 L1906,120 H1889 Z" fill="#f0f0f0"/><path d="M1880,139.40 H1914" stroke="#0b4a0b" stroke-width="1"/><path d="M1880,143.43 H1914" stroke="#0b4a0b" stroke-width="1"/><path d="M1880,147.46 H1914" stroke="#0b4a0b" stroke-width="1"/><path d="M1880,151.49 H1914" stroke="#0b4a0b" stroke-width="1"/><path d="M1880,155.52 H1914" stroke="#0b4a0b" stroke-width="1"/><path d="M1880,159.55 H1914" stroke="#0b4a0b" stroke-width="1"/><path d="M1880,163.58 H1914" stroke="#0b4a0b" stroke-width="1"/><rect x="1880" y="169.4" width="34.5" height="34" rx="3" fill="#6b5430" stroke="#ffb020" stroke-width="1.8"/><rect x="1882.5" y="171.9" width="1.5" height="1.2" fill="#bbb"/><rect x="1880.8" y="219.4" width="33.5" height="34" fill="#333" stroke="#8a8a8a" stroke-width="1.2"/><path d="M1880,208.90 H1914" stroke="#0b4a0b" stroke-width="1"/><path d="M1880,213.40 H1914" stroke="#0b4a0b" stroke-width="1"/><rect x="1882.5" y="221.9" width="1.5" height="1.2" fill="#bbb"/><rect x="1880.8" y="269.5" width="33.5" height="34" fill="#333" stroke="#8a8a8a" stroke-width="1.2"/><path d="M1880,259.00 H1914" stroke="#0b4a0b" stroke-width="1"/><path d="M1880,263.50 H1914" stroke="#0b4a0b" stroke-width="1"/><rect x="1882.5" y="272.0" width="1.5" height="1.2" fill="#bbb"/><rect x="1880.8" y="319.6" width="33.5" height="34" fill="#333" stroke="#8a8a8a" stroke-width="1.2"/><path d="M1880,309.10 H1914" stroke="#0b4a0b" stroke-width="1"/><path d="M1880,313.60 H1914" stroke="#0b4a0b" stroke-width="1"/><rect x="1882.5" y="322.1" width="1.5" height="1.2" fill="#bbb"/><rect x="1880.8" y="369.7" width="33.5" height="34" fill="#333" stroke="#8a8a8a" stroke-width="1.2"/><path d="M1880,359.20 H1914" stroke="#0b4a0b" stroke-width="1"/><path d="M1880,363.70 H1914" stroke="#0b4a0b" stroke-width="1"/><rect x="1882.5" y="372.2" width="1.5" height="1.2" fill="#bbb"/><rect x="1880.8" y="419.8" width="33.5" height="34" fill="#333" stroke="#8a8a8a" stroke-width="1.2"/><path d="M1880,409.30 H1914" stroke="#0b4a0b" stroke-width="1"/><path d="M1880,413.80 H1914" stroke="#0b4a0b" stroke-width="1"/><rect x="1882.5" y="422.3" width="1.5" height="1.2" fill="#bbb"/><rect x="1880.8" y="469.9" width="33.5" height="34" fill="#333" stroke="#8a8a8a" stroke-width="1.2"/><path d="M1880,459.40 H1914" stroke="#0b4a0b" stroke-width="1"/><path d="M1880,463.90 H1914" stroke="#0b4a0b" stroke-width="1"/><rect x="1882.5" y="472.4" width="1.5" height="1.2" fill="#bbb"/><rect x="1880.8" y="520.0" width="33.5" height="34" fill="#333" stroke="#8a8a8a" stroke-width="1.2"/><path d="M1880,509.50 H1914" stroke="#0b4a0b" stroke-width="1"/><path d="M1880,514.00 H1914" stroke="#0b4a0b" stroke-width="1"/><rect x="1882.5" y="522.5" width="1.5" height="1.2" fill="#bbb"/><rect x="1880.8" y="570.1" width="33.5" height="34" fill="#333" stroke="#8a8a8a" stroke-width="1.2"/><path d="M1880,559.60 H1914" stroke="#0b4a0b" stroke-width="1"/><path d="M1880,564.10 H1914" stroke="#0b4a0b" stroke-width="1"/><rect x="1882.5" y="572.6" width="1.5" height="1.2" fill="#bbb"/><path d="M1880,608.40 H1914" stroke="#0b4a0b" stroke-width="1"/><path d="M1880,613.90 H1914" stroke="#0b4a0b" stroke-width="1"/><path d="M1880,619.40 H1914" stroke="#0b4a0b" stroke-width="1"/><path d="M1880,624.90 H1914" stroke="#0b4a0b" stroke-width="1"/><rect x="1880.5" y="631" width="34" height="34.5" fill="#333" stroke="#e8e8e8" stroke-width="1.4"/><polygon points="1908.16,646.58 1908.16,650.02 1905.87,650.28 1904.82,652.81 1906.26,654.62 1903.82,657.06 1902.01,655.62 1899.48,656.67 1899.22,658.96 1895.78,658.96 1895.52,656.67 1892.99,655.62 1891.18,657.06 1888.74,654.62 1890.18,652.81 1889.13,650.28 1886.84,650.02 1886.84,646.58 1889.13,646.32 1890.18,643.79 1888.74,641.98 1891.18,639.54 1892.99,640.98 1895.52,639.93 1895.78,637.64 1899.22,637.64 1899.48,639.93 1902.01,640.98 1903.82,639.54 1906.26,641.98 1904.82,643.79 1905.87,646.32" fill="none" stroke="#e8e8e8" stroke-width="1.2"/><circle cx="1897.5" cy="648.3" r="4.6" fill="none" stroke="#e8e8e8" stroke-width="1.2"/><circle cx="1897.5" cy="648.3" r="2.6" fill="none" stroke="#e8e8e8" stroke-width="1"/><path d="M1880,671.00 H1914" stroke="#0b4a0b" stroke-width="1"/><path d="M1880,676.40 H1914" stroke="#0b4a0b" stroke-width="1"/><path d="M1880,681.80 H1914" stroke="#0b4a0b" stroke-width="1"/><path d="M1880,687.20 H1914" stroke="#0b4a0b" stroke-width="1"/><defs><linearGradient id="lg2" x1="0" y1="0" x2="0" y2="1"><stop offset="0" stop-color="#70c070"/><stop offset="0.5" stop-color="#108010"/><stop offset="1" stop-color="#70b870"/></linearGradient></defs><circle cx="1906.5" cy="1018.6" r="9.2" fill="url(#lg2)"/></svg>
<div class="t" style="left:1901.19px;top:1013.00px;font-size:13.5px;color:#062806;">S</div>
<svg class="s" style="left:0;top:0" width="1" height="1"><g font-family="Liberation Sans" font-weight="bold" font-size="34.60" fill="#a39c8c"><text transform="translate(1897.60,199.06) scale(1.063,1)" text-anchor="middle">0</text></g></svg>
<svg class="s" style="left:0;top:0" width="1" height="1"><g font-family="Liberation Sans" font-weight="bold" font-size="34.60" fill="#9a9a9a"><text transform="translate(1897.60,249.06) scale(1.063,1)" text-anchor="middle">1</text></g></svg>
<svg class="s" style="left:0;top:0" width="1" height="1"><g font-family="Liberation Sans" font-weight="bold" font-size="34.60" fill="#9a9a9a"><text transform="translate(1897.60,299.16) scale(1.063,1)" text-anchor="middle">2</text></g></svg>
<svg class="s" style="left:0;top:0" width="1" height="1"><g font-family="Liberation Sans" font-weight="bold" font-size="34.60" fill="#9a9a9a"><text transform="translate(1897.60,349.26) scale(1.063,1)" text-anchor="middle">3</text></g></svg>
<svg class="s" style="left:0;top:0" width="1" height="1"><g font-family="Liberation Sans" font-weight="bold" font-size="34.60" fill="#9a9a9a"><text transform="translate(1897.60,399.36) scale(1.063,1)" text-anchor="middle">4</text></g></svg>
<svg class="s" style="left:0;top:0" width="1" height="1"><g font-family="Liberation Sans" font-weight="bold" font-size="34.60" fill="#9a9a9a"><text transform="translate(1897.60,449.46) scale(1.063,1)" text-anchor="middle">5</text></g></svg>
<svg class="s" style="left:0;top:0" width="1" height="1"><g font-family="Liberation Sans" font-weight="bold" font-size="34.60" fill="#9a9a9a"><text transform="translate(1897.60,499.56) scale(1.063,1)" text-anchor="middle">6</text></g></svg>
<svg class="s" style="left:0;top:0" width="1" height="1"><g font-family="Liberation Sans" font-weight="bold" font-size="34.60" fill="#9a9a9a"><text transform="translate(1897.60,549.66) scale(1.063,1)" text-anchor="middle">7</text></g></svg>
<svg class="s" style="left:0;top:0" width="1" height="1"><g font-family="Liberation Sans" font-weight="bold" font-size="34.60" fill="#9a9a9a"><text transform="translate(1897.60,599.76) scale(1.063,1)" text-anchor="middle">8</text></g></svg>
<div class="a" style="left:749px;top:258px;width:422px;height:514px;background:#031203;border:1px solid #0c400c"></div>
<div class="a" style="left:749px;top:279px;width:422px;height:493px;background:#031203;border:1px solid #0c400c;border-bottom:none;border-radius:5px 5px 0 0"></div>
<div class="t" style="left:759.86px;top:262.00px;font-size:14.1px;color:#b2b4b2;letter-spacing:0.618px;font-weight:bold;-webkit-text-stroke:0.25px #b2b4b2;">Enable Spindle Mode</div>
<svg class="s" style="left:0px;top:0px;" width="1200" height="800" viewBox="0 0 1200 800"><path d="M754,308.4 H1166" stroke="#0d470d" stroke-width="1"/><path d="M1147.3,294.6 L1153.8,300.6 L1162.3,287.6" fill="none" stroke="#f4f4f4" stroke-width="1.7"/></svg>
<div class="t" style="left:767.20px;top:317.00px;font-size:13.5px;color:#ffa500;letter-spacing:0.448px;font-weight:bold;-webkit-text-stroke:0.25px #ffa500;">Engage Spindle Mode Settings</div>
<div class="t" style="left:809.45px;top:690.00px;font-size:13px;color:#ffa500;letter-spacing:0.413px;font-weight:bold;-webkit-text-stroke:0.25px #ffa500;">&lt;&lt;&lt; Spindle Mode Has Been Enabled &gt;&gt;&gt;</div>
<div class="t" style="left:928.93px;top:732.00px;font-size:13px;color:#ffa500;letter-spacing:0.402px;font-weight:bold;-webkit-text-stroke:0.25px #ffa500;">Press OK to begin procedure</div>
<svg class="s" style="left:784px;top:336px;" width="350" height="348" viewBox="0 0 350 348"><defs>
<linearGradient id="wd" x1="0" y1="0.6" x2="1" y2="0"><stop offset="0" stop-color="#d6a678"/><stop offset="0.5" stop-color="#ddac7c"/><stop offset="1" stop-color="#e6b888"/></linearGradient>
<linearGradient id="bt" x1="0" y1="0" x2="1" y2="0.3"><stop offset="0" stop-color="#dfb283"/><stop offset="0.5" stop-color="#e8c08c"/><stop offset="1" stop-color="#f1d6a2"/></linearGradient>
<linearGradient id="bl" x1="0" y1="0" x2="1" y2="0"><stop offset="0" stop-color="#8c6858"/><stop offset="1" stop-color="#a87c5e"/></linearGradient>
<linearGradient id="br" x1="0" y1="0" x2="1" y2="0"><stop offset="0" stop-color="#cf9c70"/><stop offset="1" stop-color="#dcaa7c"/></linearGradient>
<linearGradient id="sp" x1="0" y1="0" x2="1" y2="0"><stop offset="0" stop-color="#3e5566"/><stop offset="0.55" stop-color="#5a7282"/><stop offset="0.8" stop-color="#8ea4b0"/><stop offset="1" stop-color="#4e6575"/></linearGradient>
<linearGradient id="sp2" x1="0" y1="0" x2="1" y2="0"><stop offset="0" stop-color="#52697a"/><stop offset="0.5" stop-color="#6e8696"/><stop offset="0.78" stop-color="#9ab0bc"/><stop offset="1" stop-color="#5e7686"/></linearGradient>
<radialGradient id="sh" cx="0.5" cy="0.5" r="0.5"><stop offset="0" stop-color="#5a4030" stop-opacity="0.35"/><stop offset="1" stop-color="#5a4030" stop-opacity="0"/></radialGradient>
<clipPath id="ic"><rect x="0" y="0" width="350" height="348"/></clipPath>
</defs><g clip-path="url(#ic)"><rect x="0" y="0" width="350" height="348" fill="url(#wd)"/><polygon points="0,246 29.7,243 177,336.3 180,348 92,348 0,272" fill="#b68a68" opacity="0.75"/><rect x="0" y="0" width="64" height="60" fill="#a3aa90"/><polygon points="138,0 350,0 350,4 138,33" fill="#c6c1a1"/><polygon points="138,31 350,2 350,84 138,140" fill="#4e677e" stroke="#1a2028" stroke-width="1"/><polygon points="138,40 350,10 350,17 138,48" fill="#7d95a6"/><polygon points="138,58 350,27 350,33 138,65" fill="#8ba2b1"/><path d="M138,66 L350,34" stroke="#22303c" stroke-width="1.2"/><polygon points="138,113 350,63 350,68 138,119" fill="#7a93a3"/><path d="M138,121 L350,70" stroke="#22303c" stroke-width="1.2"/><polygon points="138,126 350,74 350,79 138,131" fill="#7a93a3"/><polygon points="213,120.4 321.7,91.3 321.7,138 213,119" fill="#a8ad94"/><polygon points="213,119 321.7,138 321.7,141 213,122" fill="#7a8e98"/><polygon points="318,87 350,80 350,146 318,139" fill="#2e425a" stroke="#1a2028" stroke-width="1"/><polygon points="62,0 140,0 140,167.5 64.5,167.5" fill="#30465f" stroke="#1a2028" stroke-width="1"/><polygon points="125,0 140,0 140,167.5 126,167.5" fill="#48627c"/><ellipse cx="79.4" cy="8.7" rx="1.8" ry="2.5" fill="#141c26"/><ellipse cx="102" cy="12.2" rx="1.8" ry="2.5" fill="#141c26"/><polygon points="0,52.3 85.5,41 110,50.6 110,151.8 0,174" fill="#3a5473" stroke="#1a2028" stroke-width="1"/><polygon points="0,52.3 85.5,41 110,50.6 0,63" fill="#566f8c"/><polygon points="0,63 110,50.4 110,52.4 0,65" fill="#1e2a3a"/><polygon points="0,73 110,57.6 110,64.6 0,80" fill="#5f7a98"/><polygon points="0,80 110,64.6 110,76.6 0,92" fill="#45607f"/><polygon points="0,92 110,76.6 110,79.6 0,95" fill="#1e2a3a"/><polygon points="0,95 110,77.4 110,103.4 0,121" fill="#324c6a"/><polygon points="0,121 110,103.4 110,108.4 0,126" fill="#5a7694"/><polygon points="0,126 110,108.4 110,119.4 0,137" fill="#3e5878"/><polygon points="0,137 110,118.3 110,120.3 0,139" fill="#1e2a3a"/><polygon points="0,141 110,121.2 110,126.2 0,146" fill="#54708e"/><polygon points="0,146 110,126.2 110,132.2 0,152" fill="#3c5675"/><polygon points="0,152 110,131.1 110,133.1 0,154" fill="#1e2a3a"/><polygon points="27.9,218.6 236,154 350,189 350,223.8 175.2,305.8" fill="url(#bt)" stroke="#1a2028" stroke-width="1.2"/><polygon points="27.9,218.6 175.2,305.8 177,336.3 29.7,243" fill="url(#bl)" stroke="#1a2028" stroke-width="1.2"/><polygon points="175.2,305.8 350,223.8 350,255.2 177,336.3" fill="url(#br)" stroke="#1a2028" stroke-width="1.2"/><ellipse cx="150" cy="205" rx="75" ry="28" fill="url(#sh)" transform="rotate(-20 150 205)"/><path d="M130.4,202.4 q11.5,-2.8 23.0,-6.9" stroke="#cf9658" stroke-width="0.9" opacity="0.55" fill="none"/><path d="M52.5,264.8 q8.7,-2.1 17.3,-5.2" stroke="#cf9658" stroke-width="0.9" opacity="0.55" fill="none"/><path d="M48.0,260.2 q5.4,-1.3 10.7,-3.2" stroke="#cf9658" stroke-width="0.9" opacity="0.55" fill="none"/><path d="M164.4,189.3 q5.9,-1.4 11.8,-3.5" stroke="#cf9658" stroke-width="0.9" opacity="0.55" fill="none"/><path d="M161.6,312.0 q6.2,-1.5 12.5,-3.7" stroke="#cf9658" stroke-width="0.9" opacity="0.55" fill="none"/><path d="M99.2,279.6 q14.5,-3.5 29.0,-8.7" stroke="#cf9658" stroke-width="0.9" opacity="0.55" fill="none"/><path d="M208.9,242.3 q14.8,-3.5 29.5,-8.9" stroke="#cf9658" stroke-width="0.9" opacity="0.55" fill="none"/><path d="M283.0,207.3 q10.8,-2.6 21.6,-6.5" stroke="#cf9658" stroke-width="0.9" opacity="0.55" fill="none"/><path d="M228.1,238.3 q10.5,-2.5 21.0,-6.3" stroke="#cf9658" stroke-width="0.9" opacity="0.55" fill="none"/><path d="M240.9,247.3 q8.1,-2.0 16.3,-4.9" stroke="#cf9658" stroke-width="0.9" opacity="0.55" fill="none"/><path d="M211.5,251.4 q8.0,-1.9 16.0,-4.8" stroke="#cf9658" stroke-width="0.9" opacity="0.55" fill="none"/><path d="M276.3,291.2 q7.4,-1.8 14.9,-4.5" stroke="#cf9658" stroke-width="0.9" opacity="0.55" fill="none"/><path d="M208.1,263.1 q13.8,-3.3 27.5,-8.3" stroke="#cf9658" stroke-width="0.9" opacity="0.55" fill="none"/><path d="M256.1,224.6 q14.8,-3.6 29.6,-8.9" stroke="#cf9658" stroke-width="0.9" opacity="0.55" fill="none"/><path d="M66.6,245.7 q12.6,-3.0 25.1,-7.5" stroke="#cf9658" stroke-width="0.9" opacity="0.55" fill="none"/><path d="M77.1,257.2 q5.4,-1.3 10.8,-3.2" stroke="#cf9658" stroke-width="0.9" opacity="0.55" fill="none"/><path d="M237.1,301.9 q10.7,-2.6 21.5,-6.4" stroke="#cf9658" stroke-width="0.9" opacity="0.55" fill="none"/><path d="M301.4,228.8 q12.0,-2.9 23.9,-7.2" stroke="#cf9658" stroke-width="0.9" opacity="0.55" fill="none"/><path d="M214.3,271.9 q9.6,-2.3 19.1,-5.7" stroke="#cf9658" stroke-width="0.9" opacity="0.55" fill="none"/><path d="M290.4,331.0 q9.7,-2.3 19.5,-5.8" stroke="#cf9658" stroke-width="0.9" opacity="0.55" fill="none"/><path d="M235.9,187.8 q12.0,-2.9 24.0,-7.2" stroke="#cf9658" stroke-width="0.9" opacity="0.55" fill="none"/><path d="M230.6,338.9 q13.2,-3.2 26.4,-7.9" stroke="#cf9658" stroke-width="0.9" opacity="0.55" fill="none"/><path d="M118.2,240.5 q11.7,-2.8 23.4,-7.0" stroke="#cf9658" stroke-width="0.9" opacity="0.55" fill="none"/><path d="M37.0,252.8 q6.7,-1.6 13.4,-4.0" stroke="#cf9658" stroke-width="0.9" opacity="0.55" fill="none"/><path d="M70.1,218.1 q8.9,-2.1 17.8,-5.3" stroke="#cf9658" stroke-width="0.9" opacity="0.55" fill="none"/><path d="M300.1,191.1 q9.5,-2.3 19.0,-5.7" stroke="#cf9658" stroke-width="0.9" opacity="0.55" fill="none"/><path d="M200.3,321.1 q13.2,-3.2 26.4,-7.9" stroke="#cf9658" stroke-width="0.9" opacity="0.55" fill="none"/><path d="M297.8,223.1 q9.2,-2.2 18.3,-5.5" stroke="#cf9658" stroke-width="0.9" opacity="0.55" fill="none"/><path d="M141.2,321.2 q14.6,-3.5 29.2,-8.7" stroke="#cf9658" stroke-width="0.9" opacity="0.55" fill="none"/><path d="M76.8,206.5 q7.3,-1.8 14.6,-4.4" stroke="#cf9658" stroke-width="0.9" opacity="0.55" fill="none"/><path d="M102.3,256.6 q10.9,-2.6 21.8,-6.5" stroke="#cf9658" stroke-width="0.9" opacity="0.55" fill="none"/><path d="M144.5,269.7 q14.5,-3.5 29.1,-8.7" stroke="#cf9658" stroke-width="0.9" opacity="0.55" fill="none"/><path d="M244.1,261.5 q11.2,-2.7 22.4,-6.7" stroke="#cf9658" stroke-width="0.9" opacity="0.55" fill="none"/><path d="M239.6,186.7 q14.0,-3.4 28.0,-8.4" stroke="#cf9658" stroke-width="0.9" opacity="0.55" fill="none"/><path d="M271.8,319.7 q13.0,-3.1 26.0,-7.8" stroke="#cf9658" stroke-width="0.9" opacity="0.55" fill="none"/><path d="M151.6,242.6 q6.0,-1.4 12.1,-3.6" stroke="#cf9658" stroke-width="0.9" opacity="0.55" fill="none"/><path d="M226.6,188.1 q5.7,-1.4 11.3,-3.4" stroke="#cf9658" stroke-width="0.9" opacity="0.55" fill="none"/><path d="M94.7,204.3 q8.4,-2.0 16.8,-5.0" stroke="#cf9658" stroke-width="0.9" opacity="0.55" fill="none"/><path d="M61.5,236.9 q5.3,-1.3 10.5,-3.2" stroke="#cf9658" stroke-width="0.9" opacity="0.55" fill="none"/><path d="M301.0,277.5 q6.5,-1.6 13.0,-3.9" stroke="#cf9658" stroke-width="0.9" opacity="0.55" fill="none"/><path d="M108.2,234.3 q8.6,-2.1 17.3,-5.2" stroke="#cf9658" stroke-width="0.9" opacity="0.55" fill="none"/><path d="M68.1,315.5 q14.9,-3.6 29.9,-9.0" stroke="#cf9658" stroke-width="0.9" opacity="0.55" fill="none"/><path d="M174.5,256.4 q5.9,-1.4 11.7,-3.5" stroke="#cf9658" stroke-width="0.9" opacity="0.55" fill="none"/><path d="M61.7,233.5 q7.6,-1.8 15.3,-4.6" stroke="#cf9658" stroke-width="0.9" opacity="0.55" fill="none"/><path d="M286.9,204.2 q5.2,-1.3 10.5,-3.1" stroke="#cf9658" stroke-width="0.9" opacity="0.55" fill="none"/><path d="M324.8,263.6 q6.5,-1.6 12.9,-3.9" stroke="#cf9658" stroke-width="0.9" opacity="0.55" fill="none"/><path d="M198.4,182.4 q10.3,-2.5 20.6,-6.2" stroke="#cf9658" stroke-width="0.9" opacity="0.55" fill="none"/><path d="M333.3,317.9 q12.0,-2.9 23.9,-7.2" stroke="#cf9658" stroke-width="0.9" opacity="0.55" fill="none"/><path d="M110.9,237.4 q6.7,-1.6 13.3,-4.0" stroke="#cf9658" stroke-width="0.9" opacity="0.55" fill="none"/><path d="M269.3,264.3 q12.8,-3.1 25.6,-7.7" stroke="#cf9658" stroke-width="0.9" opacity="0.55" fill="none"/><path d="M132.2,214.1 q13.1,-3.1 26.2,-7.9" stroke="#cf9658" stroke-width="0.9" opacity="0.55" fill="none"/><path d="M335.3,316.1 q13.1,-3.1 26.1,-7.8" stroke="#cf9658" stroke-width="0.9" opacity="0.55" fill="none"/><path d="M283.7,297.9 q7.3,-1.7 14.5,-4.4" stroke="#cf9658" stroke-width="0.9" opacity="0.55" fill="none"/><path d="M190.5,235.6 q5.3,-1.3 10.6,-3.2" stroke="#cf9658" stroke-width="0.9" opacity="0.55" fill="none"/><polygon points="27.9,218.6 236,154 350,189 350,223.8 175.2,305.8" fill="none" stroke="#1a2028" stroke-width="1.2"/><polygon points="0,272 92,348 0,348" fill="#3c546a" stroke="#1a2028" stroke-width="1"/><path d="M0,300 L55,348" stroke="#58748c" stroke-width="5"/><path d="M0,286 L76,348" stroke="#202c38" stroke-width="1.5"/><polygon points="305,348 350,318 350,348" fill="#3a4a5a" stroke="#1a2028" stroke-width="1"/><rect x="148" y="0" width="56" height="12" rx="2" fill="url(#sp2)" stroke="#1a2028" stroke-width="1"/><rect x="152" y="12" width="46" height="8" rx="2" fill="url(#sp2)" stroke="#1a2028" stroke-width="1"/><rect x="146" y="20" width="58" height="12" rx="2" fill="url(#sp2)" stroke="#1a2028" stroke-width="1"/><rect x="155" y="32" width="41" height="13" rx="2" fill="url(#sp2)" stroke="#1a2028" stroke-width="1"/><rect x="150" y="45" width="52" height="12" rx="2" fill="url(#sp2)" stroke="#1a2028" stroke-width="1"/><path d="M139.5,64 Q139.5,57 150,56 H202 Q212.7,57 212.7,64 V115 H139.5 Z" fill="url(#sp2)" stroke="#1a2028" stroke-width="1.2"/><rect x="140" y="115" width="71" height="35" fill="url(#sp)" stroke="#1a2028" stroke-width="1.2"/><rect x="147" y="150" width="54" height="15" rx="3" fill="url(#sp)" stroke="#1a2028" stroke-width="1.2"/><rect x="160" y="165" width="33" height="38" rx="2" fill="url(#sp)" stroke="#1a2028" stroke-width="1.2"/><rect x="155" y="178" width="43" height="7" rx="2" fill="url(#sp)" stroke="#1a2028" stroke-width="1"/><rect x="171.7" y="203" width="8.8" height="19" rx="2" fill="#4a6070" stroke="#1a2028" stroke-width="1"/><rect x="204" y="113" width="4" height="18" fill="#6a8290" stroke="#1a2028" stroke-width="0.8"/><path d="M208,57 C215,40 242,30 241,15 C240,6 230,0 219,-2" fill="none" stroke="#1a2028" stroke-width="3"/><path d="M208,57 C215,40 242,30 241,15 C240,6 230,0 219,-2" fill="none" stroke="#5a6e7c" stroke-width="1.3"/></g></svg></div></body></html>
